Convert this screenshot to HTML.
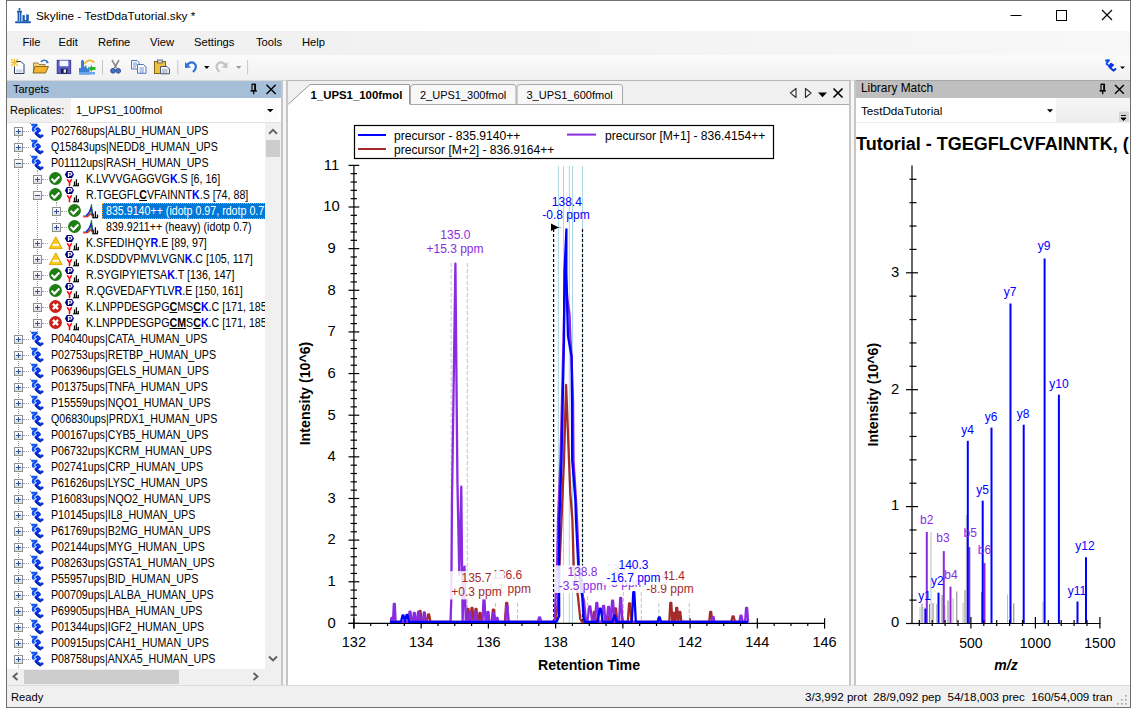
<!DOCTYPE html><html><head><meta charset="utf-8"><title>Skyline</title><style>
*{margin:0;padding:0;box-sizing:border-box}
html,body{width:1138px;height:712px;overflow:hidden;background:#fff;font-family:"Liberation Sans", sans-serif;}
.a{position:absolute}
.t{position:absolute;white-space:nowrap;line-height:1}
svg{position:absolute;overflow:visible}
.tt{position:absolute;white-space:nowrap;font-size:12px;line-height:12px;transform:scaleX(.888);transform-origin:0 0;color:#000}
.tt b{font-weight:bold}
.bx{position:absolute;width:9px;height:9px;border:1px solid #8f8f8f;background:linear-gradient(#fff,#dcdcdc)}
.bx .h{position:absolute;left:1px;top:3px;width:5px;height:1px;background:#2d4f99}
.bx .v{position:absolute;left:3px;top:1px;width:1px;height:5px;background:#2d4f99}
.dv{position:absolute;width:1px;border-left:1px dotted #a0a0a0}
.dh{position:absolute;height:1px;border-top:1px dotted #a0a0a0}
</style></head><body>
<div class="a" style="left:6px;top:0;width:1125px;height:708px;border:1px solid #6e6e6e;background:#f0f0f0"></div>
<div class="a" style="left:7px;top:1px;width:1123px;height:30px;background:#fff"></div>
<div class="t" style="left:36px;top:10.8px;font-size:11.8px;color:#000">Skyline - TestDdaTutorial.sky *</div>
<div class="a" style="left:7px;top:31px;width:1123px;height:24px;background:linear-gradient(to right,#f0f0f0 0%,#f2f2f2 45%,#f8f8f8 100%)"></div>
<div class="t" style="left:22.5px;top:37.4px;font-size:11.2px;color:#000">File</div>
<div class="t" style="left:58.6px;top:37.4px;font-size:11.2px;color:#000">Edit</div>
<div class="t" style="left:98px;top:37.4px;font-size:11.2px;color:#000">Refine</div>
<div class="t" style="left:150px;top:37.4px;font-size:11.2px;color:#000">View</div>
<div class="t" style="left:194px;top:37.4px;font-size:11.2px;color:#000">Settings</div>
<div class="t" style="left:256px;top:37.4px;font-size:11.2px;color:#000">Tools</div>
<div class="t" style="left:302px;top:37.4px;font-size:11.2px;color:#000">Help</div>
<div class="a" style="left:7px;top:55px;width:1123px;height:25px;background:linear-gradient(#fbfbfb,#f1f1f1)"></div>
<div class="a" style="left:7px;top:80px;width:1123px;height:1px;background:#dadada"></div>
<div class="a" style="left:7px;top:81px;width:275px;height:17px;background:#a7bed8"></div>
<div class="t" style="left:13px;top:84px;font-size:11px;color:#000">Targets</div>
<div class="a" style="left:7px;top:98px;width:64px;height:25px;background:#f0f0f0"></div>
<div class="t" style="left:10px;top:105px;font-size:11px;color:#000">Replicates:</div>
<div class="a" style="left:71px;top:98px;width:210px;height:25px;background:#fff"></div>
<div class="a" style="left:264px;top:98px;width:13px;height:24px;background:#fcfcfc"></div>
<div class="t" style="left:76px;top:105px;font-size:11px;color:#000">1_UPS1_100fmol</div>
<div class="a" style="left:7px;top:122px;width:274px;height:1px;background:#e3e3e3"></div>
<div class="a" style="left:7px;top:123px;width:258px;height:546px;background:#fff"></div>
<div class="a" style="left:7px;top:123px;width:258px;height:546px;overflow:hidden"><div class="a" style="left:-7px;top:-123px;width:1138px;height:712px"><div class="dv" style="left:18px;top:136px;height:532px"></div>
<div class="dv" style="left:37px;top:170px;height:166px"></div>
<div class="dv" style="left:56px;top:202px;height:24px"></div>
<div class="bx" style="left:14px;top:127px"><i class="h"></i><i class="v"></i></div>
<div class="dh" style="left:23px;top:131px;width:6px"></div>
<svg width="15" height="16" style="left:30px;top:123px" viewBox="0 0 15 16">
<circle cx="0.5" cy="0.4" r="0.7" fill="#5a78a8"/>
<path d="M2.4,1.9 L6.4,2 L3.4,4.8 L3,7 L3.6,7.6" fill="none" stroke="#0b50ec" stroke-width="2.5" stroke-linejoin="round" stroke-linecap="round"/>
<path d="M6.6,6.2 L8,5.6 L9.6,7.4 L7.6,8.8 L6,9.8 L8.4,12.2 L10.6,13.6 L12.2,12.6" fill="none" stroke="#0836e6" stroke-width="2.7" stroke-linejoin="round" stroke-linecap="round"/>
<path d="M5.2,10.6 L8,13.2 L10.2,14.8" fill="none" stroke="#00168c" stroke-width="1.3" stroke-linecap="round"/>
<path d="M3.2,2.2 L5,2.2 M8,6.6 L8.6,7.4" stroke="#4a9cff" stroke-width="0.8"/>
</svg>
<div class="tt" style="left:50.8px;top:124.9px">P02768ups|ALBU_HUMAN_UPS</div>
<div class="bx" style="left:14px;top:143px"><i class="h"></i><i class="v"></i></div>
<div class="dh" style="left:23px;top:147px;width:6px"></div>
<svg width="15" height="16" style="left:30px;top:139px" viewBox="0 0 15 16">
<circle cx="0.5" cy="0.4" r="0.7" fill="#5a78a8"/>
<path d="M2.4,1.9 L6.4,2 L3.4,4.8 L3,7 L3.6,7.6" fill="none" stroke="#0b50ec" stroke-width="2.5" stroke-linejoin="round" stroke-linecap="round"/>
<path d="M6.6,6.2 L8,5.6 L9.6,7.4 L7.6,8.8 L6,9.8 L8.4,12.2 L10.6,13.6 L12.2,12.6" fill="none" stroke="#0836e6" stroke-width="2.7" stroke-linejoin="round" stroke-linecap="round"/>
<path d="M5.2,10.6 L8,13.2 L10.2,14.8" fill="none" stroke="#00168c" stroke-width="1.3" stroke-linecap="round"/>
<path d="M3.2,2.2 L5,2.2 M8,6.6 L8.6,7.4" stroke="#4a9cff" stroke-width="0.8"/>
</svg>
<div class="tt" style="left:50.8px;top:140.9px">Q15843ups|NEDD8_HUMAN_UPS</div>
<div class="bx" style="left:14px;top:159px"><i class="h"></i></div>
<div class="dh" style="left:23px;top:163px;width:6px"></div>
<svg width="15" height="16" style="left:30px;top:155px" viewBox="0 0 15 16">
<circle cx="0.5" cy="0.4" r="0.7" fill="#5a78a8"/>
<path d="M2.4,1.9 L6.4,2 L3.4,4.8 L3,7 L3.6,7.6" fill="none" stroke="#0b50ec" stroke-width="2.5" stroke-linejoin="round" stroke-linecap="round"/>
<path d="M6.6,6.2 L8,5.6 L9.6,7.4 L7.6,8.8 L6,9.8 L8.4,12.2 L10.6,13.6 L12.2,12.6" fill="none" stroke="#0836e6" stroke-width="2.7" stroke-linejoin="round" stroke-linecap="round"/>
<path d="M5.2,10.6 L8,13.2 L10.2,14.8" fill="none" stroke="#00168c" stroke-width="1.3" stroke-linecap="round"/>
<path d="M3.2,2.2 L5,2.2 M8,6.6 L8.6,7.4" stroke="#4a9cff" stroke-width="0.8"/>
</svg>
<div class="tt" style="left:50.8px;top:156.9px">P01112ups|RASH_HUMAN_UPS</div>
<div class="bx" style="left:33px;top:175px"><i class="h"></i><i class="v"></i></div>
<div class="dh" style="left:42px;top:179px;width:6px"></div>
<svg width="14" height="14" style="left:49px;top:172px" viewBox="0 0 14 14"><circle cx="6.5" cy="6.5" r="6.4" fill="#1f7d14"/><path d="M2.6,6.6 L5.4,9.6 L10.4,4.4" fill="none" stroke="#fff" stroke-width="2.1"/></svg>
<svg width="16" height="16" style="left:64px;top:171px" viewBox="0 0 16 16">
<path d="M0.9,3.5 L2.9,0.1 L8,0.1 L10,3.5 L8,7.1 L2.9,7.1 Z" fill="#00007e"/>
<path d="M4.4,6 L4.4,1.6 L6.4,1.6 Q7.9,1.6 7.9,2.9 Q7.9,4.1 6.4,4.1 L4.4,4.1" fill="none" stroke="#fff" stroke-width="1.1"/>
<path d="M3.2,8.3 L5.5,11.5 L7.8,8.3 M5.5,11.3 L5.5,15.2" fill="none" stroke="#ff0a0a" stroke-width="1.6"/>
<path d="M9.2,14.7 L15,14.7" stroke="#000" stroke-width="1.2"/>
<path d="M10.5,14.5 L10.5,10.6 M12.4,14.5 L12.4,8.3 M14.3,14.5 L14.3,12" fill="none" stroke="#000" stroke-width="1.3"/>
</svg>
<div class="tt" style="left:86.4px;top:172.9px">K.LVVVGAGGVG<b style="color:#0000ff">K</b>.S [6, 16]</div>
<div class="bx" style="left:33px;top:191px"><i class="h"></i></div>
<div class="dh" style="left:42px;top:195px;width:6px"></div>
<svg width="14" height="14" style="left:49px;top:188px" viewBox="0 0 14 14"><circle cx="6.5" cy="6.5" r="6.4" fill="#1f7d14"/><path d="M2.6,6.6 L5.4,9.6 L10.4,4.4" fill="none" stroke="#fff" stroke-width="2.1"/></svg>
<svg width="16" height="16" style="left:64px;top:187px" viewBox="0 0 16 16">
<path d="M0.9,3.5 L2.9,0.1 L8,0.1 L10,3.5 L8,7.1 L2.9,7.1 Z" fill="#00007e"/>
<path d="M4.4,6 L4.4,1.6 L6.4,1.6 Q7.9,1.6 7.9,2.9 Q7.9,4.1 6.4,4.1 L4.4,4.1" fill="none" stroke="#fff" stroke-width="1.1"/>
<path d="M3.2,8.3 L5.5,11.5 L7.8,8.3 M5.5,11.3 L5.5,15.2" fill="none" stroke="#ff0a0a" stroke-width="1.6"/>
<path d="M9.2,14.7 L15,14.7" stroke="#000" stroke-width="1.2"/>
<path d="M10.5,14.5 L10.5,10.6 M12.4,14.5 L12.4,8.3 M14.3,14.5 L14.3,12" fill="none" stroke="#000" stroke-width="1.3"/>
</svg>
<div class="tt" style="left:86.4px;top:188.9px">R.TGEGFL<b style="text-decoration:underline">C</b>VFAINNT<b style="color:#0000ff">K</b>.S [74, 88]</div>
<div class="bx" style="left:52px;top:207px"><i class="h"></i><i class="v"></i></div>
<div class="dh" style="left:61px;top:211px;width:6px"></div>
<svg width="14" height="14" style="left:68px;top:204px" viewBox="0 0 14 14"><circle cx="6.5" cy="6.5" r="6.4" fill="#1f7d14"/><path d="M2.6,6.6 L5.4,9.6 L10.4,4.4" fill="none" stroke="#fff" stroke-width="2.1"/></svg>
<svg width="16" height="16" style="left:83px;top:203px" viewBox="0 0 16 16">
<path d="M0,13 L4,12.8 L7,10 L8.5,1.2 L9.3,10 L9.3,13" fill="none" stroke="#1a8a1a" stroke-width="1.1"/>
<path d="M3,12.8 L6,9.5 L8,5 L9,8.5 L9.2,11" fill="none" stroke="#1010ff" stroke-width="1.2"/>
<path d="M0.3,13.9 L4.5,13.6 L8.5,10.5 L9,13.5" fill="none" stroke="#e8221a" stroke-width="1.1"/>
<path d="M9.3,14.7 L15,14.7" stroke="#000" stroke-width="1.2"/>
<path d="M10.2,14.5 L10.2,10.5 M12.4,14.5 L12.4,8.3 M14.5,14.5 L14.5,11.6" fill="none" stroke="#000" stroke-width="1.3"/>
</svg>
<div class="a" style="left:101.8px;top:203.3px;width:180px;height:16px;background:#0078d7;border:1px dotted #f0a030"></div>
<div class="tt" style="left:105.5px;top:204.9px;color:#fff">835.9140++ (idotp 0.97, rdotp 0.7</div>
<div class="bx" style="left:52px;top:223px"><i class="h"></i><i class="v"></i></div>
<div class="dh" style="left:61px;top:227px;width:6px"></div>
<svg width="14" height="14" style="left:68px;top:220px" viewBox="0 0 14 14"><circle cx="6.5" cy="6.5" r="6.4" fill="#1f7d14"/><path d="M2.6,6.6 L5.4,9.6 L10.4,4.4" fill="none" stroke="#fff" stroke-width="2.1"/></svg>
<svg width="16" height="16" style="left:83px;top:219px" viewBox="0 0 16 16">
<path d="M0,13 L4,12.8 L7,10 L8.5,1.2 L9.3,10 L9.3,13" fill="none" stroke="#1a8a1a" stroke-width="1.1"/>
<path d="M3,12.8 L6,9.5 L8,5 L9,8.5 L9.2,11" fill="none" stroke="#1010ff" stroke-width="1.2"/>
<path d="M0.3,13.9 L4.5,13.6 L8.5,10.5 L9,13.5" fill="none" stroke="#e8221a" stroke-width="1.1"/>
<path d="M9.3,14.7 L15,14.7" stroke="#000" stroke-width="1.2"/>
<path d="M10.2,14.5 L10.2,10.5 M12.4,14.5 L12.4,8.3 M14.5,14.5 L14.5,11.6" fill="none" stroke="#000" stroke-width="1.3"/>
</svg>
<div class="tt" style="left:105.5px;top:220.9px">839.9211++ (heavy) (idotp 0.7)</div>
<div class="bx" style="left:33px;top:239px"><i class="h"></i><i class="v"></i></div>
<div class="dh" style="left:42px;top:243px;width:6px"></div>
<svg width="15" height="14" style="left:49px;top:236px" viewBox="0 0 15 14"><path d="M6.8,0.8 L13.3,12.6 L0.3,12.6 Z" fill="#f7c919" stroke="#d9a200" stroke-width="0.9" stroke-linejoin="round"/><rect x="3.7" y="7.9" width="6.2" height="1.9" fill="#fff"/></svg>
<svg width="16" height="16" style="left:64px;top:235px" viewBox="0 0 16 16">
<path d="M0.9,3.5 L2.9,0.1 L8,0.1 L10,3.5 L8,7.1 L2.9,7.1 Z" fill="#00007e"/>
<path d="M4.4,6 L4.4,1.6 L6.4,1.6 Q7.9,1.6 7.9,2.9 Q7.9,4.1 6.4,4.1 L4.4,4.1" fill="none" stroke="#fff" stroke-width="1.1"/>
<path d="M3.2,8.3 L5.5,11.5 L7.8,8.3 M5.5,11.3 L5.5,15.2" fill="none" stroke="#ff0a0a" stroke-width="1.6"/>
<path d="M9.2,14.7 L15,14.7" stroke="#000" stroke-width="1.2"/>
<path d="M10.5,14.5 L10.5,10.6 M12.4,14.5 L12.4,8.3 M14.3,14.5 L14.3,12" fill="none" stroke="#000" stroke-width="1.3"/>
</svg>
<div class="tt" style="left:86.4px;top:236.9px">K.SFEDIHQY<b style="color:#0000ff">R</b>.E [89, 97]</div>
<div class="bx" style="left:33px;top:255px"><i class="h"></i><i class="v"></i></div>
<div class="dh" style="left:42px;top:259px;width:6px"></div>
<svg width="15" height="14" style="left:49px;top:252px" viewBox="0 0 15 14"><path d="M6.8,0.8 L13.3,12.6 L0.3,12.6 Z" fill="#f7c919" stroke="#d9a200" stroke-width="0.9" stroke-linejoin="round"/><rect x="3.7" y="7.9" width="6.2" height="1.9" fill="#fff"/></svg>
<svg width="16" height="16" style="left:64px;top:251px" viewBox="0 0 16 16">
<path d="M0.9,3.5 L2.9,0.1 L8,0.1 L10,3.5 L8,7.1 L2.9,7.1 Z" fill="#00007e"/>
<path d="M4.4,6 L4.4,1.6 L6.4,1.6 Q7.9,1.6 7.9,2.9 Q7.9,4.1 6.4,4.1 L4.4,4.1" fill="none" stroke="#fff" stroke-width="1.1"/>
<path d="M3.2,8.3 L5.5,11.5 L7.8,8.3 M5.5,11.3 L5.5,15.2" fill="none" stroke="#ff0a0a" stroke-width="1.6"/>
<path d="M9.2,14.7 L15,14.7" stroke="#000" stroke-width="1.2"/>
<path d="M10.5,14.5 L10.5,10.6 M12.4,14.5 L12.4,8.3 M14.3,14.5 L14.3,12" fill="none" stroke="#000" stroke-width="1.3"/>
</svg>
<div class="tt" style="left:86.4px;top:252.9px">K.DSDDVPMVLVGN<b style="color:#0000ff">K</b>.C [105, 117]</div>
<div class="bx" style="left:33px;top:271px"><i class="h"></i><i class="v"></i></div>
<div class="dh" style="left:42px;top:275px;width:6px"></div>
<svg width="14" height="14" style="left:49px;top:268px" viewBox="0 0 14 14"><circle cx="6.5" cy="6.5" r="6.4" fill="#1f7d14"/><path d="M2.6,6.6 L5.4,9.6 L10.4,4.4" fill="none" stroke="#fff" stroke-width="2.1"/></svg>
<svg width="16" height="16" style="left:64px;top:267px" viewBox="0 0 16 16">
<path d="M0.9,3.5 L2.9,0.1 L8,0.1 L10,3.5 L8,7.1 L2.9,7.1 Z" fill="#00007e"/>
<path d="M4.4,6 L4.4,1.6 L6.4,1.6 Q7.9,1.6 7.9,2.9 Q7.9,4.1 6.4,4.1 L4.4,4.1" fill="none" stroke="#fff" stroke-width="1.1"/>
<path d="M3.2,8.3 L5.5,11.5 L7.8,8.3 M5.5,11.3 L5.5,15.2" fill="none" stroke="#ff0a0a" stroke-width="1.6"/>
<path d="M9.2,14.7 L15,14.7" stroke="#000" stroke-width="1.2"/>
<path d="M10.5,14.5 L10.5,10.6 M12.4,14.5 L12.4,8.3 M14.3,14.5 L14.3,12" fill="none" stroke="#000" stroke-width="1.3"/>
</svg>
<div class="tt" style="left:86.4px;top:268.9px">R.SYGIPYIETSA<b style="color:#0000ff">K</b>.T [136, 147]</div>
<div class="bx" style="left:33px;top:287px"><i class="h"></i><i class="v"></i></div>
<div class="dh" style="left:42px;top:291px;width:6px"></div>
<svg width="14" height="14" style="left:49px;top:284px" viewBox="0 0 14 14"><circle cx="6.5" cy="6.5" r="6.4" fill="#1f7d14"/><path d="M2.6,6.6 L5.4,9.6 L10.4,4.4" fill="none" stroke="#fff" stroke-width="2.1"/></svg>
<svg width="16" height="16" style="left:64px;top:283px" viewBox="0 0 16 16">
<path d="M0.9,3.5 L2.9,0.1 L8,0.1 L10,3.5 L8,7.1 L2.9,7.1 Z" fill="#00007e"/>
<path d="M4.4,6 L4.4,1.6 L6.4,1.6 Q7.9,1.6 7.9,2.9 Q7.9,4.1 6.4,4.1 L4.4,4.1" fill="none" stroke="#fff" stroke-width="1.1"/>
<path d="M3.2,8.3 L5.5,11.5 L7.8,8.3 M5.5,11.3 L5.5,15.2" fill="none" stroke="#ff0a0a" stroke-width="1.6"/>
<path d="M9.2,14.7 L15,14.7" stroke="#000" stroke-width="1.2"/>
<path d="M10.5,14.5 L10.5,10.6 M12.4,14.5 L12.4,8.3 M14.3,14.5 L14.3,12" fill="none" stroke="#000" stroke-width="1.3"/>
</svg>
<div class="tt" style="left:86.4px;top:284.9px">R.QGVEDAFYTLV<b style="color:#0000ff">R</b>.E [150, 161]</div>
<div class="bx" style="left:33px;top:303px"><i class="h"></i><i class="v"></i></div>
<div class="dh" style="left:42px;top:307px;width:6px"></div>
<svg width="14" height="14" style="left:49px;top:300px" viewBox="0 0 14 14"><circle cx="6.5" cy="6.5" r="6.4" fill="#cc1f1a"/><path d="M3.9,3.9 L9.1,9.1 M9.1,3.9 L3.9,9.1" fill="none" stroke="#fff" stroke-width="2.2"/></svg>
<svg width="16" height="16" style="left:64px;top:299px" viewBox="0 0 16 16">
<path d="M0.9,3.5 L2.9,0.1 L8,0.1 L10,3.5 L8,7.1 L2.9,7.1 Z" fill="#00007e"/>
<path d="M4.4,6 L4.4,1.6 L6.4,1.6 Q7.9,1.6 7.9,2.9 Q7.9,4.1 6.4,4.1 L4.4,4.1" fill="none" stroke="#fff" stroke-width="1.1"/>
<path d="M3.2,8.3 L5.5,11.5 L7.8,8.3 M5.5,11.3 L5.5,15.2" fill="none" stroke="#ff0a0a" stroke-width="1.6"/>
<path d="M9.2,14.7 L15,14.7" stroke="#000" stroke-width="1.2"/>
<path d="M10.5,14.5 L10.5,10.6 M12.4,14.5 L12.4,8.3 M14.3,14.5 L14.3,12" fill="none" stroke="#000" stroke-width="1.3"/>
</svg>
<div class="tt" style="left:86.4px;top:300.9px">K.LNPPDESGPG<b style="text-decoration:underline">C</b>MS<b style="text-decoration:underline">C</b><b style="color:#0000ff">K</b>.C [171, 185]</div>
<div class="bx" style="left:33px;top:319px"><i class="h"></i><i class="v"></i></div>
<div class="dh" style="left:42px;top:323px;width:6px"></div>
<svg width="14" height="14" style="left:49px;top:316px" viewBox="0 0 14 14"><circle cx="6.5" cy="6.5" r="6.4" fill="#cc1f1a"/><path d="M3.9,3.9 L9.1,9.1 M9.1,3.9 L3.9,9.1" fill="none" stroke="#fff" stroke-width="2.2"/></svg>
<svg width="16" height="16" style="left:64px;top:315px" viewBox="0 0 16 16">
<path d="M0.9,3.5 L2.9,0.1 L8,0.1 L10,3.5 L8,7.1 L2.9,7.1 Z" fill="#00007e"/>
<path d="M4.4,6 L4.4,1.6 L6.4,1.6 Q7.9,1.6 7.9,2.9 Q7.9,4.1 6.4,4.1 L4.4,4.1" fill="none" stroke="#fff" stroke-width="1.1"/>
<path d="M3.2,8.3 L5.5,11.5 L7.8,8.3 M5.5,11.3 L5.5,15.2" fill="none" stroke="#ff0a0a" stroke-width="1.6"/>
<path d="M9.2,14.7 L15,14.7" stroke="#000" stroke-width="1.2"/>
<path d="M10.5,14.5 L10.5,10.6 M12.4,14.5 L12.4,8.3 M14.3,14.5 L14.3,12" fill="none" stroke="#000" stroke-width="1.3"/>
</svg>
<div class="tt" style="left:86.4px;top:316.9px">K.LNPPDESGPG<b style="text-decoration:underline">C</b><b style="text-decoration:underline">M</b>S<b style="text-decoration:underline">C</b><b style="color:#0000ff">K</b>.C [171, 185]</div>
<div class="bx" style="left:14px;top:335px"><i class="h"></i><i class="v"></i></div>
<div class="dh" style="left:23px;top:339px;width:6px"></div>
<svg width="15" height="16" style="left:30px;top:331px" viewBox="0 0 15 16">
<circle cx="0.5" cy="0.4" r="0.7" fill="#5a78a8"/>
<path d="M2.4,1.9 L6.4,2 L3.4,4.8 L3,7 L3.6,7.6" fill="none" stroke="#0b50ec" stroke-width="2.5" stroke-linejoin="round" stroke-linecap="round"/>
<path d="M6.6,6.2 L8,5.6 L9.6,7.4 L7.6,8.8 L6,9.8 L8.4,12.2 L10.6,13.6 L12.2,12.6" fill="none" stroke="#0836e6" stroke-width="2.7" stroke-linejoin="round" stroke-linecap="round"/>
<path d="M5.2,10.6 L8,13.2 L10.2,14.8" fill="none" stroke="#00168c" stroke-width="1.3" stroke-linecap="round"/>
<path d="M3.2,2.2 L5,2.2 M8,6.6 L8.6,7.4" stroke="#4a9cff" stroke-width="0.8"/>
</svg>
<div class="tt" style="left:50.8px;top:332.9px">P04040ups|CATA_HUMAN_UPS</div>
<div class="bx" style="left:14px;top:351px"><i class="h"></i><i class="v"></i></div>
<div class="dh" style="left:23px;top:355px;width:6px"></div>
<svg width="15" height="16" style="left:30px;top:347px" viewBox="0 0 15 16">
<circle cx="0.5" cy="0.4" r="0.7" fill="#5a78a8"/>
<path d="M2.4,1.9 L6.4,2 L3.4,4.8 L3,7 L3.6,7.6" fill="none" stroke="#0b50ec" stroke-width="2.5" stroke-linejoin="round" stroke-linecap="round"/>
<path d="M6.6,6.2 L8,5.6 L9.6,7.4 L7.6,8.8 L6,9.8 L8.4,12.2 L10.6,13.6 L12.2,12.6" fill="none" stroke="#0836e6" stroke-width="2.7" stroke-linejoin="round" stroke-linecap="round"/>
<path d="M5.2,10.6 L8,13.2 L10.2,14.8" fill="none" stroke="#00168c" stroke-width="1.3" stroke-linecap="round"/>
<path d="M3.2,2.2 L5,2.2 M8,6.6 L8.6,7.4" stroke="#4a9cff" stroke-width="0.8"/>
</svg>
<div class="tt" style="left:50.8px;top:348.9px">P02753ups|RETBP_HUMAN_UPS</div>
<div class="bx" style="left:14px;top:367px"><i class="h"></i><i class="v"></i></div>
<div class="dh" style="left:23px;top:371px;width:6px"></div>
<svg width="15" height="16" style="left:30px;top:363px" viewBox="0 0 15 16">
<circle cx="0.5" cy="0.4" r="0.7" fill="#5a78a8"/>
<path d="M2.4,1.9 L6.4,2 L3.4,4.8 L3,7 L3.6,7.6" fill="none" stroke="#0b50ec" stroke-width="2.5" stroke-linejoin="round" stroke-linecap="round"/>
<path d="M6.6,6.2 L8,5.6 L9.6,7.4 L7.6,8.8 L6,9.8 L8.4,12.2 L10.6,13.6 L12.2,12.6" fill="none" stroke="#0836e6" stroke-width="2.7" stroke-linejoin="round" stroke-linecap="round"/>
<path d="M5.2,10.6 L8,13.2 L10.2,14.8" fill="none" stroke="#00168c" stroke-width="1.3" stroke-linecap="round"/>
<path d="M3.2,2.2 L5,2.2 M8,6.6 L8.6,7.4" stroke="#4a9cff" stroke-width="0.8"/>
</svg>
<div class="tt" style="left:50.8px;top:364.9px">P06396ups|GELS_HUMAN_UPS</div>
<div class="bx" style="left:14px;top:383px"><i class="h"></i><i class="v"></i></div>
<div class="dh" style="left:23px;top:387px;width:6px"></div>
<svg width="15" height="16" style="left:30px;top:379px" viewBox="0 0 15 16">
<circle cx="0.5" cy="0.4" r="0.7" fill="#5a78a8"/>
<path d="M2.4,1.9 L6.4,2 L3.4,4.8 L3,7 L3.6,7.6" fill="none" stroke="#0b50ec" stroke-width="2.5" stroke-linejoin="round" stroke-linecap="round"/>
<path d="M6.6,6.2 L8,5.6 L9.6,7.4 L7.6,8.8 L6,9.8 L8.4,12.2 L10.6,13.6 L12.2,12.6" fill="none" stroke="#0836e6" stroke-width="2.7" stroke-linejoin="round" stroke-linecap="round"/>
<path d="M5.2,10.6 L8,13.2 L10.2,14.8" fill="none" stroke="#00168c" stroke-width="1.3" stroke-linecap="round"/>
<path d="M3.2,2.2 L5,2.2 M8,6.6 L8.6,7.4" stroke="#4a9cff" stroke-width="0.8"/>
</svg>
<div class="tt" style="left:50.8px;top:380.9px">P01375ups|TNFA_HUMAN_UPS</div>
<div class="bx" style="left:14px;top:399px"><i class="h"></i><i class="v"></i></div>
<div class="dh" style="left:23px;top:403px;width:6px"></div>
<svg width="15" height="16" style="left:30px;top:395px" viewBox="0 0 15 16">
<circle cx="0.5" cy="0.4" r="0.7" fill="#5a78a8"/>
<path d="M2.4,1.9 L6.4,2 L3.4,4.8 L3,7 L3.6,7.6" fill="none" stroke="#0b50ec" stroke-width="2.5" stroke-linejoin="round" stroke-linecap="round"/>
<path d="M6.6,6.2 L8,5.6 L9.6,7.4 L7.6,8.8 L6,9.8 L8.4,12.2 L10.6,13.6 L12.2,12.6" fill="none" stroke="#0836e6" stroke-width="2.7" stroke-linejoin="round" stroke-linecap="round"/>
<path d="M5.2,10.6 L8,13.2 L10.2,14.8" fill="none" stroke="#00168c" stroke-width="1.3" stroke-linecap="round"/>
<path d="M3.2,2.2 L5,2.2 M8,6.6 L8.6,7.4" stroke="#4a9cff" stroke-width="0.8"/>
</svg>
<div class="tt" style="left:50.8px;top:396.9px">P15559ups|NQO1_HUMAN_UPS</div>
<div class="bx" style="left:14px;top:415px"><i class="h"></i><i class="v"></i></div>
<div class="dh" style="left:23px;top:419px;width:6px"></div>
<svg width="15" height="16" style="left:30px;top:411px" viewBox="0 0 15 16">
<circle cx="0.5" cy="0.4" r="0.7" fill="#5a78a8"/>
<path d="M2.4,1.9 L6.4,2 L3.4,4.8 L3,7 L3.6,7.6" fill="none" stroke="#0b50ec" stroke-width="2.5" stroke-linejoin="round" stroke-linecap="round"/>
<path d="M6.6,6.2 L8,5.6 L9.6,7.4 L7.6,8.8 L6,9.8 L8.4,12.2 L10.6,13.6 L12.2,12.6" fill="none" stroke="#0836e6" stroke-width="2.7" stroke-linejoin="round" stroke-linecap="round"/>
<path d="M5.2,10.6 L8,13.2 L10.2,14.8" fill="none" stroke="#00168c" stroke-width="1.3" stroke-linecap="round"/>
<path d="M3.2,2.2 L5,2.2 M8,6.6 L8.6,7.4" stroke="#4a9cff" stroke-width="0.8"/>
</svg>
<div class="tt" style="left:50.8px;top:412.9px">Q06830ups|PRDX1_HUMAN_UPS</div>
<div class="bx" style="left:14px;top:431px"><i class="h"></i><i class="v"></i></div>
<div class="dh" style="left:23px;top:435px;width:6px"></div>
<svg width="15" height="16" style="left:30px;top:427px" viewBox="0 0 15 16">
<circle cx="0.5" cy="0.4" r="0.7" fill="#5a78a8"/>
<path d="M2.4,1.9 L6.4,2 L3.4,4.8 L3,7 L3.6,7.6" fill="none" stroke="#0b50ec" stroke-width="2.5" stroke-linejoin="round" stroke-linecap="round"/>
<path d="M6.6,6.2 L8,5.6 L9.6,7.4 L7.6,8.8 L6,9.8 L8.4,12.2 L10.6,13.6 L12.2,12.6" fill="none" stroke="#0836e6" stroke-width="2.7" stroke-linejoin="round" stroke-linecap="round"/>
<path d="M5.2,10.6 L8,13.2 L10.2,14.8" fill="none" stroke="#00168c" stroke-width="1.3" stroke-linecap="round"/>
<path d="M3.2,2.2 L5,2.2 M8,6.6 L8.6,7.4" stroke="#4a9cff" stroke-width="0.8"/>
</svg>
<div class="tt" style="left:50.8px;top:428.9px">P00167ups|CYB5_HUMAN_UPS</div>
<div class="bx" style="left:14px;top:447px"><i class="h"></i><i class="v"></i></div>
<div class="dh" style="left:23px;top:451px;width:6px"></div>
<svg width="15" height="16" style="left:30px;top:443px" viewBox="0 0 15 16">
<circle cx="0.5" cy="0.4" r="0.7" fill="#5a78a8"/>
<path d="M2.4,1.9 L6.4,2 L3.4,4.8 L3,7 L3.6,7.6" fill="none" stroke="#0b50ec" stroke-width="2.5" stroke-linejoin="round" stroke-linecap="round"/>
<path d="M6.6,6.2 L8,5.6 L9.6,7.4 L7.6,8.8 L6,9.8 L8.4,12.2 L10.6,13.6 L12.2,12.6" fill="none" stroke="#0836e6" stroke-width="2.7" stroke-linejoin="round" stroke-linecap="round"/>
<path d="M5.2,10.6 L8,13.2 L10.2,14.8" fill="none" stroke="#00168c" stroke-width="1.3" stroke-linecap="round"/>
<path d="M3.2,2.2 L5,2.2 M8,6.6 L8.6,7.4" stroke="#4a9cff" stroke-width="0.8"/>
</svg>
<div class="tt" style="left:50.8px;top:444.9px">P06732ups|KCRM_HUMAN_UPS</div>
<div class="bx" style="left:14px;top:463px"><i class="h"></i><i class="v"></i></div>
<div class="dh" style="left:23px;top:467px;width:6px"></div>
<svg width="15" height="16" style="left:30px;top:459px" viewBox="0 0 15 16">
<circle cx="0.5" cy="0.4" r="0.7" fill="#5a78a8"/>
<path d="M2.4,1.9 L6.4,2 L3.4,4.8 L3,7 L3.6,7.6" fill="none" stroke="#0b50ec" stroke-width="2.5" stroke-linejoin="round" stroke-linecap="round"/>
<path d="M6.6,6.2 L8,5.6 L9.6,7.4 L7.6,8.8 L6,9.8 L8.4,12.2 L10.6,13.6 L12.2,12.6" fill="none" stroke="#0836e6" stroke-width="2.7" stroke-linejoin="round" stroke-linecap="round"/>
<path d="M5.2,10.6 L8,13.2 L10.2,14.8" fill="none" stroke="#00168c" stroke-width="1.3" stroke-linecap="round"/>
<path d="M3.2,2.2 L5,2.2 M8,6.6 L8.6,7.4" stroke="#4a9cff" stroke-width="0.8"/>
</svg>
<div class="tt" style="left:50.8px;top:460.9px">P02741ups|CRP_HUMAN_UPS</div>
<div class="bx" style="left:14px;top:479px"><i class="h"></i><i class="v"></i></div>
<div class="dh" style="left:23px;top:483px;width:6px"></div>
<svg width="15" height="16" style="left:30px;top:475px" viewBox="0 0 15 16">
<circle cx="0.5" cy="0.4" r="0.7" fill="#5a78a8"/>
<path d="M2.4,1.9 L6.4,2 L3.4,4.8 L3,7 L3.6,7.6" fill="none" stroke="#0b50ec" stroke-width="2.5" stroke-linejoin="round" stroke-linecap="round"/>
<path d="M6.6,6.2 L8,5.6 L9.6,7.4 L7.6,8.8 L6,9.8 L8.4,12.2 L10.6,13.6 L12.2,12.6" fill="none" stroke="#0836e6" stroke-width="2.7" stroke-linejoin="round" stroke-linecap="round"/>
<path d="M5.2,10.6 L8,13.2 L10.2,14.8" fill="none" stroke="#00168c" stroke-width="1.3" stroke-linecap="round"/>
<path d="M3.2,2.2 L5,2.2 M8,6.6 L8.6,7.4" stroke="#4a9cff" stroke-width="0.8"/>
</svg>
<div class="tt" style="left:50.8px;top:476.9px">P61626ups|LYSC_HUMAN_UPS</div>
<div class="bx" style="left:14px;top:495px"><i class="h"></i><i class="v"></i></div>
<div class="dh" style="left:23px;top:499px;width:6px"></div>
<svg width="15" height="16" style="left:30px;top:491px" viewBox="0 0 15 16">
<circle cx="0.5" cy="0.4" r="0.7" fill="#5a78a8"/>
<path d="M2.4,1.9 L6.4,2 L3.4,4.8 L3,7 L3.6,7.6" fill="none" stroke="#0b50ec" stroke-width="2.5" stroke-linejoin="round" stroke-linecap="round"/>
<path d="M6.6,6.2 L8,5.6 L9.6,7.4 L7.6,8.8 L6,9.8 L8.4,12.2 L10.6,13.6 L12.2,12.6" fill="none" stroke="#0836e6" stroke-width="2.7" stroke-linejoin="round" stroke-linecap="round"/>
<path d="M5.2,10.6 L8,13.2 L10.2,14.8" fill="none" stroke="#00168c" stroke-width="1.3" stroke-linecap="round"/>
<path d="M3.2,2.2 L5,2.2 M8,6.6 L8.6,7.4" stroke="#4a9cff" stroke-width="0.8"/>
</svg>
<div class="tt" style="left:50.8px;top:492.9px">P16083ups|NQO2_HUMAN_UPS</div>
<div class="bx" style="left:14px;top:511px"><i class="h"></i><i class="v"></i></div>
<div class="dh" style="left:23px;top:515px;width:6px"></div>
<svg width="15" height="16" style="left:30px;top:507px" viewBox="0 0 15 16">
<circle cx="0.5" cy="0.4" r="0.7" fill="#5a78a8"/>
<path d="M2.4,1.9 L6.4,2 L3.4,4.8 L3,7 L3.6,7.6" fill="none" stroke="#0b50ec" stroke-width="2.5" stroke-linejoin="round" stroke-linecap="round"/>
<path d="M6.6,6.2 L8,5.6 L9.6,7.4 L7.6,8.8 L6,9.8 L8.4,12.2 L10.6,13.6 L12.2,12.6" fill="none" stroke="#0836e6" stroke-width="2.7" stroke-linejoin="round" stroke-linecap="round"/>
<path d="M5.2,10.6 L8,13.2 L10.2,14.8" fill="none" stroke="#00168c" stroke-width="1.3" stroke-linecap="round"/>
<path d="M3.2,2.2 L5,2.2 M8,6.6 L8.6,7.4" stroke="#4a9cff" stroke-width="0.8"/>
</svg>
<div class="tt" style="left:50.8px;top:508.9px">P10145ups|IL8_HUMAN_UPS</div>
<div class="bx" style="left:14px;top:527px"><i class="h"></i><i class="v"></i></div>
<div class="dh" style="left:23px;top:531px;width:6px"></div>
<svg width="15" height="16" style="left:30px;top:523px" viewBox="0 0 15 16">
<circle cx="0.5" cy="0.4" r="0.7" fill="#5a78a8"/>
<path d="M2.4,1.9 L6.4,2 L3.4,4.8 L3,7 L3.6,7.6" fill="none" stroke="#0b50ec" stroke-width="2.5" stroke-linejoin="round" stroke-linecap="round"/>
<path d="M6.6,6.2 L8,5.6 L9.6,7.4 L7.6,8.8 L6,9.8 L8.4,12.2 L10.6,13.6 L12.2,12.6" fill="none" stroke="#0836e6" stroke-width="2.7" stroke-linejoin="round" stroke-linecap="round"/>
<path d="M5.2,10.6 L8,13.2 L10.2,14.8" fill="none" stroke="#00168c" stroke-width="1.3" stroke-linecap="round"/>
<path d="M3.2,2.2 L5,2.2 M8,6.6 L8.6,7.4" stroke="#4a9cff" stroke-width="0.8"/>
</svg>
<div class="tt" style="left:50.8px;top:524.9px">P61769ups|B2MG_HUMAN_UPS</div>
<div class="bx" style="left:14px;top:543px"><i class="h"></i><i class="v"></i></div>
<div class="dh" style="left:23px;top:547px;width:6px"></div>
<svg width="15" height="16" style="left:30px;top:539px" viewBox="0 0 15 16">
<circle cx="0.5" cy="0.4" r="0.7" fill="#5a78a8"/>
<path d="M2.4,1.9 L6.4,2 L3.4,4.8 L3,7 L3.6,7.6" fill="none" stroke="#0b50ec" stroke-width="2.5" stroke-linejoin="round" stroke-linecap="round"/>
<path d="M6.6,6.2 L8,5.6 L9.6,7.4 L7.6,8.8 L6,9.8 L8.4,12.2 L10.6,13.6 L12.2,12.6" fill="none" stroke="#0836e6" stroke-width="2.7" stroke-linejoin="round" stroke-linecap="round"/>
<path d="M5.2,10.6 L8,13.2 L10.2,14.8" fill="none" stroke="#00168c" stroke-width="1.3" stroke-linecap="round"/>
<path d="M3.2,2.2 L5,2.2 M8,6.6 L8.6,7.4" stroke="#4a9cff" stroke-width="0.8"/>
</svg>
<div class="tt" style="left:50.8px;top:540.9px">P02144ups|MYG_HUMAN_UPS</div>
<div class="bx" style="left:14px;top:559px"><i class="h"></i><i class="v"></i></div>
<div class="dh" style="left:23px;top:563px;width:6px"></div>
<svg width="15" height="16" style="left:30px;top:555px" viewBox="0 0 15 16">
<circle cx="0.5" cy="0.4" r="0.7" fill="#5a78a8"/>
<path d="M2.4,1.9 L6.4,2 L3.4,4.8 L3,7 L3.6,7.6" fill="none" stroke="#0b50ec" stroke-width="2.5" stroke-linejoin="round" stroke-linecap="round"/>
<path d="M6.6,6.2 L8,5.6 L9.6,7.4 L7.6,8.8 L6,9.8 L8.4,12.2 L10.6,13.6 L12.2,12.6" fill="none" stroke="#0836e6" stroke-width="2.7" stroke-linejoin="round" stroke-linecap="round"/>
<path d="M5.2,10.6 L8,13.2 L10.2,14.8" fill="none" stroke="#00168c" stroke-width="1.3" stroke-linecap="round"/>
<path d="M3.2,2.2 L5,2.2 M8,6.6 L8.6,7.4" stroke="#4a9cff" stroke-width="0.8"/>
</svg>
<div class="tt" style="left:50.8px;top:556.9px">P08263ups|GSTA1_HUMAN_UPS</div>
<div class="bx" style="left:14px;top:575px"><i class="h"></i><i class="v"></i></div>
<div class="dh" style="left:23px;top:579px;width:6px"></div>
<svg width="15" height="16" style="left:30px;top:571px" viewBox="0 0 15 16">
<circle cx="0.5" cy="0.4" r="0.7" fill="#5a78a8"/>
<path d="M2.4,1.9 L6.4,2 L3.4,4.8 L3,7 L3.6,7.6" fill="none" stroke="#0b50ec" stroke-width="2.5" stroke-linejoin="round" stroke-linecap="round"/>
<path d="M6.6,6.2 L8,5.6 L9.6,7.4 L7.6,8.8 L6,9.8 L8.4,12.2 L10.6,13.6 L12.2,12.6" fill="none" stroke="#0836e6" stroke-width="2.7" stroke-linejoin="round" stroke-linecap="round"/>
<path d="M5.2,10.6 L8,13.2 L10.2,14.8" fill="none" stroke="#00168c" stroke-width="1.3" stroke-linecap="round"/>
<path d="M3.2,2.2 L5,2.2 M8,6.6 L8.6,7.4" stroke="#4a9cff" stroke-width="0.8"/>
</svg>
<div class="tt" style="left:50.8px;top:572.9px">P55957ups|BID_HUMAN_UPS</div>
<div class="bx" style="left:14px;top:591px"><i class="h"></i><i class="v"></i></div>
<div class="dh" style="left:23px;top:595px;width:6px"></div>
<svg width="15" height="16" style="left:30px;top:587px" viewBox="0 0 15 16">
<circle cx="0.5" cy="0.4" r="0.7" fill="#5a78a8"/>
<path d="M2.4,1.9 L6.4,2 L3.4,4.8 L3,7 L3.6,7.6" fill="none" stroke="#0b50ec" stroke-width="2.5" stroke-linejoin="round" stroke-linecap="round"/>
<path d="M6.6,6.2 L8,5.6 L9.6,7.4 L7.6,8.8 L6,9.8 L8.4,12.2 L10.6,13.6 L12.2,12.6" fill="none" stroke="#0836e6" stroke-width="2.7" stroke-linejoin="round" stroke-linecap="round"/>
<path d="M5.2,10.6 L8,13.2 L10.2,14.8" fill="none" stroke="#00168c" stroke-width="1.3" stroke-linecap="round"/>
<path d="M3.2,2.2 L5,2.2 M8,6.6 L8.6,7.4" stroke="#4a9cff" stroke-width="0.8"/>
</svg>
<div class="tt" style="left:50.8px;top:588.9px">P00709ups|LALBA_HUMAN_UPS</div>
<div class="bx" style="left:14px;top:607px"><i class="h"></i><i class="v"></i></div>
<div class="dh" style="left:23px;top:611px;width:6px"></div>
<svg width="15" height="16" style="left:30px;top:603px" viewBox="0 0 15 16">
<circle cx="0.5" cy="0.4" r="0.7" fill="#5a78a8"/>
<path d="M2.4,1.9 L6.4,2 L3.4,4.8 L3,7 L3.6,7.6" fill="none" stroke="#0b50ec" stroke-width="2.5" stroke-linejoin="round" stroke-linecap="round"/>
<path d="M6.6,6.2 L8,5.6 L9.6,7.4 L7.6,8.8 L6,9.8 L8.4,12.2 L10.6,13.6 L12.2,12.6" fill="none" stroke="#0836e6" stroke-width="2.7" stroke-linejoin="round" stroke-linecap="round"/>
<path d="M5.2,10.6 L8,13.2 L10.2,14.8" fill="none" stroke="#00168c" stroke-width="1.3" stroke-linecap="round"/>
<path d="M3.2,2.2 L5,2.2 M8,6.6 L8.6,7.4" stroke="#4a9cff" stroke-width="0.8"/>
</svg>
<div class="tt" style="left:50.8px;top:604.9px">P69905ups|HBA_HUMAN_UPS</div>
<div class="bx" style="left:14px;top:623px"><i class="h"></i><i class="v"></i></div>
<div class="dh" style="left:23px;top:627px;width:6px"></div>
<svg width="15" height="16" style="left:30px;top:619px" viewBox="0 0 15 16">
<circle cx="0.5" cy="0.4" r="0.7" fill="#5a78a8"/>
<path d="M2.4,1.9 L6.4,2 L3.4,4.8 L3,7 L3.6,7.6" fill="none" stroke="#0b50ec" stroke-width="2.5" stroke-linejoin="round" stroke-linecap="round"/>
<path d="M6.6,6.2 L8,5.6 L9.6,7.4 L7.6,8.8 L6,9.8 L8.4,12.2 L10.6,13.6 L12.2,12.6" fill="none" stroke="#0836e6" stroke-width="2.7" stroke-linejoin="round" stroke-linecap="round"/>
<path d="M5.2,10.6 L8,13.2 L10.2,14.8" fill="none" stroke="#00168c" stroke-width="1.3" stroke-linecap="round"/>
<path d="M3.2,2.2 L5,2.2 M8,6.6 L8.6,7.4" stroke="#4a9cff" stroke-width="0.8"/>
</svg>
<div class="tt" style="left:50.8px;top:620.9px">P01344ups|IGF2_HUMAN_UPS</div>
<div class="bx" style="left:14px;top:639px"><i class="h"></i><i class="v"></i></div>
<div class="dh" style="left:23px;top:643px;width:6px"></div>
<svg width="15" height="16" style="left:30px;top:635px" viewBox="0 0 15 16">
<circle cx="0.5" cy="0.4" r="0.7" fill="#5a78a8"/>
<path d="M2.4,1.9 L6.4,2 L3.4,4.8 L3,7 L3.6,7.6" fill="none" stroke="#0b50ec" stroke-width="2.5" stroke-linejoin="round" stroke-linecap="round"/>
<path d="M6.6,6.2 L8,5.6 L9.6,7.4 L7.6,8.8 L6,9.8 L8.4,12.2 L10.6,13.6 L12.2,12.6" fill="none" stroke="#0836e6" stroke-width="2.7" stroke-linejoin="round" stroke-linecap="round"/>
<path d="M5.2,10.6 L8,13.2 L10.2,14.8" fill="none" stroke="#00168c" stroke-width="1.3" stroke-linecap="round"/>
<path d="M3.2,2.2 L5,2.2 M8,6.6 L8.6,7.4" stroke="#4a9cff" stroke-width="0.8"/>
</svg>
<div class="tt" style="left:50.8px;top:636.9px">P00915ups|CAH1_HUMAN_UPS</div>
<div class="bx" style="left:14px;top:655px"><i class="h"></i><i class="v"></i></div>
<div class="dh" style="left:23px;top:659px;width:6px"></div>
<svg width="15" height="16" style="left:30px;top:651px" viewBox="0 0 15 16">
<circle cx="0.5" cy="0.4" r="0.7" fill="#5a78a8"/>
<path d="M2.4,1.9 L6.4,2 L3.4,4.8 L3,7 L3.6,7.6" fill="none" stroke="#0b50ec" stroke-width="2.5" stroke-linejoin="round" stroke-linecap="round"/>
<path d="M6.6,6.2 L8,5.6 L9.6,7.4 L7.6,8.8 L6,9.8 L8.4,12.2 L10.6,13.6 L12.2,12.6" fill="none" stroke="#0836e6" stroke-width="2.7" stroke-linejoin="round" stroke-linecap="round"/>
<path d="M5.2,10.6 L8,13.2 L10.2,14.8" fill="none" stroke="#00168c" stroke-width="1.3" stroke-linecap="round"/>
<path d="M3.2,2.2 L5,2.2 M8,6.6 L8.6,7.4" stroke="#4a9cff" stroke-width="0.8"/>
</svg>
<div class="tt" style="left:50.8px;top:652.9px">P08758ups|ANXA5_HUMAN_UPS</div></div></div>
<div class="a" style="left:265px;top:123px;width:16px;height:546px;background:#f0f0f0"></div>
<div class="a" style="left:266px;top:140px;width:14px;height:17px;background:#cdcdcd"></div>
<div class="a" style="left:7px;top:669px;width:274px;height:16px;background:#f0f0f0"></div>
<div class="a" style="left:24px;top:670px;width:155px;height:14px;background:#cdcdcd"></div>
<div class="a" style="left:281px;top:80px;width:2px;height:605px;background:#c6c6c6"></div>
<div class="a" style="left:283px;top:81px;width:3px;height:604px;background:#f6f6f6"></div>
<div class="a" style="left:851px;top:81px;width:3px;height:604px;background:#f8f8f8"></div>
<div class="a" style="left:286px;top:80px;width:565px;height:605px;border:2px solid #c6c6c6;border-top:1px solid #b8b8b8;border-bottom:none;background:#fff"></div>
<div class="a" style="left:288px;top:81px;width:561px;height:23px;background:#f0f0f0"></div>
<div class="a" style="left:288px;top:104px;width:561px;height:1px;background:#a9a9a9"></div>
<div class="a" style="left:854px;top:80px;width:276px;height:605px;border-left:2px solid #c6c6c6;background:#fff"></div>
<div class="a" style="left:856px;top:80px;width:274px;height:1px;background:#a8a8a8"></div>
<div class="a" style="left:856px;top:81px;width:274px;height:17px;background:#bfbfbf"></div>
<div class="t" style="left:861px;top:82.6px;font-size:11.9px;color:#000">Library Match</div>
<div class="a" style="left:856px;top:98px;width:274px;height:25px;background:linear-gradient(#f7f7f7,#ececec)"></div>
<div class="a" style="left:856px;top:98px;width:200px;height:24px;background:#fff"></div>
<div class="t" style="left:861px;top:105.3px;font-size:11.7px;color:#000">TestDdaTutorial</div>
<svg width="1138" height="712" style="left:0;top:0" viewBox="0 0 1138 712" font-family="'Liberation Sans', sans-serif"><rect x="354.5" y="125.5" width="419" height="33" fill="#fff" stroke="#000" stroke-width="1.2"/>
<line x1="358" y1="135" x2="386" y2="135" stroke="#0000ff" stroke-width="2" />
<line x1="358" y1="149" x2="386" y2="149" stroke="#a52a2a" stroke-width="2" />
<line x1="567" y1="134.6" x2="596" y2="134.6" stroke="#8a2be2" stroke-width="2" />
<text x="394" y="140" font-size="12.1" fill="#000" text-anchor="start" font-weight="normal" >precursor - 835.9140++</text>
<text x="394" y="153.6" font-size="12.1" fill="#000" text-anchor="start" font-weight="normal" >precursor [M+2] - 836.9164++</text>
<text x="605" y="139.5" font-size="12.1" fill="#000" text-anchor="start" font-weight="normal" >precursor [M+1] - 836.4154++</text>
<line x1="558.4" y1="166" x2="558.4" y2="623" stroke="#add8e6" stroke-width="1" />
<line x1="563.5" y1="166" x2="563.5" y2="623" stroke="#add8e6" stroke-width="1" />
<line x1="569.3" y1="166" x2="569.3" y2="623" stroke="#add8e6" stroke-width="1" />
<line x1="572.5" y1="166" x2="572.5" y2="623" stroke="#add8e6" stroke-width="1" />
<line x1="582.5" y1="166" x2="582.5" y2="623" stroke="#add8e6" stroke-width="1" />
<line x1="451.2" y1="263" x2="451.2" y2="621" stroke="#c4c4c4" stroke-width="1" stroke-dasharray="4,2"/>
<line x1="467.3" y1="263" x2="467.3" y2="621" stroke="#c4c4c4" stroke-width="1" stroke-dasharray="4,2"/>
<line x1="495.4" y1="603" x2="495.4" y2="621" stroke="#c4c4c4" stroke-width="1" stroke-dasharray="4,2"/>
<line x1="517.5" y1="603" x2="517.5" y2="621" stroke="#c4c4c4" stroke-width="1" stroke-dasharray="4,2"/>
<line x1="587.4" y1="596" x2="587.4" y2="621" stroke="#c4c4c4" stroke-width="1" stroke-dasharray="4,2"/>
<line x1="623.4" y1="592" x2="623.4" y2="621" stroke="#c4c4c4" stroke-width="1" stroke-dasharray="4,2"/>
<line x1="641.3" y1="592" x2="641.3" y2="621" stroke="#c4c4c4" stroke-width="1" stroke-dasharray="4,2"/>
<line x1="658.8" y1="603" x2="658.8" y2="621" stroke="#c4c4c4" stroke-width="1" stroke-dasharray="4,2"/>
<line x1="689.3" y1="603" x2="689.3" y2="621" stroke="#c4c4c4" stroke-width="1" stroke-dasharray="4,2"/>
<line x1="553.6" y1="229" x2="553.6" y2="623" stroke="#000" stroke-width="1.2" stroke-dasharray="3,2"/>
<line x1="582.5" y1="229" x2="582.5" y2="623" stroke="#000" stroke-width="1.2" stroke-dasharray="3,2"/>
<path d="M551,223.5 L551,231 L558.5,227.8 L562.7,227.6 L558.5,227.2 Z" fill="#000"/>
<line x1="353.9" y1="165.4" x2="353.9" y2="628.5" stroke="#000" stroke-width="1.2" />
<line x1="348.5" y1="623.4" x2="824.8" y2="623.4" stroke="#000" stroke-width="1.2" />
<line x1="348.5" y1="623.4" x2="359.3" y2="623.4" stroke="#000" stroke-width="1.2" />
<line x1="350.6" y1="615.072" x2="357" y2="615.072" stroke="#000" stroke-width="1.2" />
<line x1="350.6" y1="606.744" x2="357" y2="606.744" stroke="#000" stroke-width="1.2" />
<line x1="350.6" y1="598.4159999999999" x2="357" y2="598.4159999999999" stroke="#000" stroke-width="1.2" />
<line x1="350.6" y1="590.088" x2="357" y2="590.088" stroke="#000" stroke-width="1.2" />
<line x1="348.5" y1="581.76" x2="359.3" y2="581.76" stroke="#000" stroke-width="1.2" />
<line x1="350.6" y1="573.432" x2="357" y2="573.432" stroke="#000" stroke-width="1.2" />
<line x1="350.6" y1="565.1039999999999" x2="357" y2="565.1039999999999" stroke="#000" stroke-width="1.2" />
<line x1="350.6" y1="556.776" x2="357" y2="556.776" stroke="#000" stroke-width="1.2" />
<line x1="350.6" y1="548.448" x2="357" y2="548.448" stroke="#000" stroke-width="1.2" />
<line x1="348.5" y1="540.12" x2="359.3" y2="540.12" stroke="#000" stroke-width="1.2" />
<line x1="350.6" y1="531.7919999999999" x2="357" y2="531.7919999999999" stroke="#000" stroke-width="1.2" />
<line x1="350.6" y1="523.4639999999999" x2="357" y2="523.4639999999999" stroke="#000" stroke-width="1.2" />
<line x1="350.6" y1="515.136" x2="357" y2="515.136" stroke="#000" stroke-width="1.2" />
<line x1="350.6" y1="506.808" x2="357" y2="506.808" stroke="#000" stroke-width="1.2" />
<line x1="348.5" y1="498.47999999999996" x2="359.3" y2="498.47999999999996" stroke="#000" stroke-width="1.2" />
<line x1="350.6" y1="490.15199999999993" x2="357" y2="490.15199999999993" stroke="#000" stroke-width="1.2" />
<line x1="350.6" y1="481.82399999999996" x2="357" y2="481.82399999999996" stroke="#000" stroke-width="1.2" />
<line x1="350.6" y1="473.496" x2="357" y2="473.496" stroke="#000" stroke-width="1.2" />
<line x1="350.6" y1="465.168" x2="357" y2="465.168" stroke="#000" stroke-width="1.2" />
<line x1="348.5" y1="456.84" x2="359.3" y2="456.84" stroke="#000" stroke-width="1.2" />
<line x1="350.6" y1="448.51199999999994" x2="357" y2="448.51199999999994" stroke="#000" stroke-width="1.2" />
<line x1="350.6" y1="440.18399999999997" x2="357" y2="440.18399999999997" stroke="#000" stroke-width="1.2" />
<line x1="350.6" y1="431.856" x2="357" y2="431.856" stroke="#000" stroke-width="1.2" />
<line x1="350.6" y1="423.5279999999999" x2="357" y2="423.5279999999999" stroke="#000" stroke-width="1.2" />
<line x1="348.5" y1="415.2" x2="359.3" y2="415.2" stroke="#000" stroke-width="1.2" />
<line x1="350.6" y1="406.87199999999996" x2="357" y2="406.87199999999996" stroke="#000" stroke-width="1.2" />
<line x1="350.6" y1="398.544" x2="357" y2="398.544" stroke="#000" stroke-width="1.2" />
<line x1="350.6" y1="390.21599999999995" x2="357" y2="390.21599999999995" stroke="#000" stroke-width="1.2" />
<line x1="350.6" y1="381.8879999999999" x2="357" y2="381.8879999999999" stroke="#000" stroke-width="1.2" />
<line x1="348.5" y1="373.55999999999995" x2="359.3" y2="373.55999999999995" stroke="#000" stroke-width="1.2" />
<line x1="350.6" y1="365.23199999999997" x2="357" y2="365.23199999999997" stroke="#000" stroke-width="1.2" />
<line x1="350.6" y1="356.90399999999994" x2="357" y2="356.90399999999994" stroke="#000" stroke-width="1.2" />
<line x1="350.6" y1="348.57599999999996" x2="357" y2="348.57599999999996" stroke="#000" stroke-width="1.2" />
<line x1="350.6" y1="340.24799999999993" x2="357" y2="340.24799999999993" stroke="#000" stroke-width="1.2" />
<line x1="348.5" y1="331.91999999999996" x2="359.3" y2="331.91999999999996" stroke="#000" stroke-width="1.2" />
<line x1="350.6" y1="323.592" x2="357" y2="323.592" stroke="#000" stroke-width="1.2" />
<line x1="350.6" y1="315.26399999999995" x2="357" y2="315.26399999999995" stroke="#000" stroke-width="1.2" />
<line x1="350.6" y1="306.936" x2="357" y2="306.936" stroke="#000" stroke-width="1.2" />
<line x1="350.6" y1="298.60799999999995" x2="357" y2="298.60799999999995" stroke="#000" stroke-width="1.2" />
<line x1="348.5" y1="290.28" x2="359.3" y2="290.28" stroke="#000" stroke-width="1.2" />
<line x1="350.6" y1="281.95199999999994" x2="357" y2="281.95199999999994" stroke="#000" stroke-width="1.2" />
<line x1="350.6" y1="273.62399999999997" x2="357" y2="273.62399999999997" stroke="#000" stroke-width="1.2" />
<line x1="350.6" y1="265.296" x2="357" y2="265.296" stroke="#000" stroke-width="1.2" />
<line x1="350.6" y1="256.96799999999996" x2="357" y2="256.96799999999996" stroke="#000" stroke-width="1.2" />
<line x1="348.5" y1="248.64" x2="359.3" y2="248.64" stroke="#000" stroke-width="1.2" />
<line x1="350.6" y1="240.31199999999995" x2="357" y2="240.31199999999995" stroke="#000" stroke-width="1.2" />
<line x1="350.6" y1="231.98399999999998" x2="357" y2="231.98399999999998" stroke="#000" stroke-width="1.2" />
<line x1="350.6" y1="223.6559999999999" x2="357" y2="223.6559999999999" stroke="#000" stroke-width="1.2" />
<line x1="350.6" y1="215.32799999999992" x2="357" y2="215.32799999999992" stroke="#000" stroke-width="1.2" />
<line x1="348.5" y1="207.0" x2="359.3" y2="207.0" stroke="#000" stroke-width="1.2" />
<line x1="350.6" y1="198.6719999999999" x2="357" y2="198.6719999999999" stroke="#000" stroke-width="1.2" />
<line x1="350.6" y1="190.34399999999994" x2="357" y2="190.34399999999994" stroke="#000" stroke-width="1.2" />
<line x1="350.6" y1="182.0159999999999" x2="357" y2="182.0159999999999" stroke="#000" stroke-width="1.2" />
<line x1="350.6" y1="173.68799999999993" x2="357" y2="173.68799999999993" stroke="#000" stroke-width="1.2" />
<line x1="348.5" y1="165.35999999999996" x2="359.3" y2="165.35999999999996" stroke="#000" stroke-width="1.2" />
<line x1="353.9" y1="618.2" x2="353.9" y2="628.6" stroke="#000" stroke-width="1.2" />
<line x1="370.71" y1="623" x2="370.71" y2="626" stroke="#000" stroke-width="1.2" />
<line x1="387.52" y1="623" x2="387.52" y2="626" stroke="#000" stroke-width="1.2" />
<line x1="404.33" y1="623" x2="404.33" y2="626" stroke="#000" stroke-width="1.2" />
<line x1="421.14" y1="618.2" x2="421.14" y2="628.6" stroke="#000" stroke-width="1.2" />
<line x1="437.95" y1="623" x2="437.95" y2="626" stroke="#000" stroke-width="1.2" />
<line x1="454.76" y1="623" x2="454.76" y2="626" stroke="#000" stroke-width="1.2" />
<line x1="471.56999999999994" y1="623" x2="471.56999999999994" y2="626" stroke="#000" stroke-width="1.2" />
<line x1="488.38" y1="618.2" x2="488.38" y2="628.6" stroke="#000" stroke-width="1.2" />
<line x1="505.18999999999994" y1="623" x2="505.18999999999994" y2="626" stroke="#000" stroke-width="1.2" />
<line x1="522.0" y1="623" x2="522.0" y2="626" stroke="#000" stroke-width="1.2" />
<line x1="538.81" y1="623" x2="538.81" y2="626" stroke="#000" stroke-width="1.2" />
<line x1="555.6199999999999" y1="618.2" x2="555.6199999999999" y2="628.6" stroke="#000" stroke-width="1.2" />
<line x1="572.43" y1="623" x2="572.43" y2="626" stroke="#000" stroke-width="1.2" />
<line x1="589.24" y1="623" x2="589.24" y2="626" stroke="#000" stroke-width="1.2" />
<line x1="606.05" y1="623" x2="606.05" y2="626" stroke="#000" stroke-width="1.2" />
<line x1="622.8599999999999" y1="618.2" x2="622.8599999999999" y2="628.6" stroke="#000" stroke-width="1.2" />
<line x1="639.67" y1="623" x2="639.67" y2="626" stroke="#000" stroke-width="1.2" />
<line x1="656.48" y1="623" x2="656.48" y2="626" stroke="#000" stroke-width="1.2" />
<line x1="673.29" y1="623" x2="673.29" y2="626" stroke="#000" stroke-width="1.2" />
<line x1="690.0999999999999" y1="618.2" x2="690.0999999999999" y2="628.6" stroke="#000" stroke-width="1.2" />
<line x1="706.91" y1="623" x2="706.91" y2="626" stroke="#000" stroke-width="1.2" />
<line x1="723.72" y1="623" x2="723.72" y2="626" stroke="#000" stroke-width="1.2" />
<line x1="740.53" y1="623" x2="740.53" y2="626" stroke="#000" stroke-width="1.2" />
<line x1="757.3399999999999" y1="618.2" x2="757.3399999999999" y2="628.6" stroke="#000" stroke-width="1.2" />
<line x1="774.1499999999999" y1="623" x2="774.1499999999999" y2="626" stroke="#000" stroke-width="1.2" />
<line x1="790.9599999999999" y1="623" x2="790.9599999999999" y2="626" stroke="#000" stroke-width="1.2" />
<line x1="807.77" y1="623" x2="807.77" y2="626" stroke="#000" stroke-width="1.2" />
<line x1="824.5799999999999" y1="618.2" x2="824.5799999999999" y2="628.6" stroke="#000" stroke-width="1.2" />
<polyline points="390.0,621.8 418.4,621.8 419.5,611.0 420.5,611.0 421.6,621.8 426.8,621.8 428.1,614.5 429.1,614.5 430.4,621.8 466.5,621.8 467.5,609.0 468.5,609.0 469.5,621.8 470.5,621.8 471.5,608.0 472.5,608.0 473.5,621.8 474.5,621.8 475.5,609.0 476.5,609.0 477.5,621.8 478.5,621.8 479.5,613.0 480.5,613.0 481.5,621.8 491.8,621.8 492.9,609.7 493.9,609.7 495.0,621.8 504.9,621.8 506.2,602.8 507.2,602.8 508.5,621.8 553.0,621.8 556.0,620.0 558.0,600.0 561.5,520.0 564.0,460.0 566.1,385.0 569.0,460.0 570.3,493.0 572.4,520.0 573.7,566.0 578.0,597.0 580.3,619.0 582.0,621.8 592.5,621.8 593.8,612.0 594.8,612.0 596.1,621.8 607.9,621.8 609.0,616.5 610.0,616.5 611.1,621.8 613.7,621.8 615.0,608.4 616.0,608.4 617.3,621.8 627.8,621.8 629.1,603.4 630.1,603.4 631.4,621.8 669.3,621.8 670.3,602.8 671.3,602.8 672.3,621.8 672.4,621.8 673.1,613.0 674.1,613.0 674.8,621.8 675.3,621.8 676.2,607.9 677.2,607.9 678.1,621.8 678.3,621.8 679.3,611.8 680.3,611.8 681.3,621.8 709.2,621.8 710.2,611.8 711.2,611.8 712.2,621.8 731.3,621.8 732.6,616.3 733.6,616.3 734.9,621.8 748.0,621.8" fill="none" stroke="#a52a2a" stroke-width="2.3" stroke-linejoin="round" /><polyline points="390.0,621.8 390.7,621.8 391.5,618.0 392.5,618.0 393.3,621.8 393.0,621.8 393.8,604.0 394.8,604.0 395.6,621.8 408.5,621.8 409.5,611.7 410.5,611.7 411.5,621.8 412.9,621.8 413.8,613.0 414.8,613.0 415.7,621.8 417.1,621.8 418.0,612.0 419.0,612.0 419.9,621.8 422.9,621.8 423.8,612.5 424.8,612.5 425.7,621.8 450.5,621.8 451.3,600.0 452.0,500.0 455.4,263.6 457.4,480.0 459.3,575.0 461.3,486.7 462.6,621.8 464.5,566.6 465.8,621.8 468.5,621.8 469.5,612.0 470.5,612.0 471.5,621.8 474.5,621.8 475.5,612.0 476.5,612.0 477.5,621.8 482.5,621.8 483.5,599.3 484.5,599.3 485.5,621.8 486.6,621.8 487.5,612.0 488.5,612.0 489.4,621.8 492.0,621.8 492.9,613.0 493.9,613.0 494.8,621.8 495.6,621.8 496.5,618.0 497.5,618.0 498.4,621.8 505.5,621.8 506.5,606.0 507.5,606.0 508.5,621.8 537.8,621.8 539.1,617.5 540.1,617.5 541.4,621.8 552.0,621.8 554.7,620.0 557.2,560.0 558.0,520.0 560.5,460.0 562.0,400.0 563.5,340.0 564.5,300.0 565.5,274.0 567.5,300.0 569.5,314.0 570.5,340.0 571.5,357.0 573.0,400.0 573.5,460.0 576.0,500.0 577.0,520.0 579.0,566.0 583.0,597.0 584.0,600.6 586.0,621.8 587.4,621.8 589.3,606.3 590.3,606.3 592.2,621.8 595.0,621.8 596.3,603.0 597.3,603.0 598.6,621.8 601.8,621.8 603.1,605.8 604.1,605.8 605.4,621.8 606.8,621.8 608.1,606.9 609.1,606.9 610.4,621.8 610.9,621.8 612.1,600.7 613.1,600.7 614.3,621.8 619.1,621.8 620.2,597.9 621.2,597.9 622.3,621.8 711.5,621.8 712.5,616.9 713.5,616.9 714.5,621.8 739.4,621.8 740.5,615.7 741.5,615.7 742.6,621.8 745.1,621.8 746.1,607.9 747.1,607.9 748.1,621.8 748.3,621.8" fill="none" stroke="#8a2be2" stroke-width="2.3" stroke-linejoin="round" /><polyline points="390.0,621.8 401.0,621.8 402.5,615.4 403.5,615.4 405.0,621.8 405.0,621.8 406.5,615.0 407.5,615.0 409.0,621.8 553.0,621.8 556.5,621.8 557.7,619.0 559.2,616.0 559.0,566.0 559.4,520.0 561.5,460.0 562.7,400.0 564.0,340.0 564.2,300.0 564.5,272.0 566.4,229.5 566.3,272.0 567.0,300.0 568.0,336.0 571.6,357.0 572.0,400.0 572.2,460.0 575.4,500.0 576.0,520.0 578.3,566.0 582.3,597.4 583.8,619.0 585.0,621.8 597.6,621.8 599.7,608.6 600.7,608.6 602.8,621.8 612.7,621.8 614.0,615.3 615.0,615.3 616.3,621.8 631.8,621.8 633.3,592.1 634.3,592.1 635.8,621.8 657.7,621.8 658.8,617.4 659.8,617.4 660.9,621.8 748.0,621.8" fill="none" stroke="#0000ff" stroke-width="2.3" stroke-linejoin="round" />
<text x="331.5" y="627.6999999999999" font-size="14.8" fill="#000" text-anchor="middle" font-weight="normal" >0</text>
<text x="331.5" y="586.06" font-size="14.8" fill="#000" text-anchor="middle" font-weight="normal" >1</text>
<text x="331.5" y="544.42" font-size="14.8" fill="#000" text-anchor="middle" font-weight="normal" >2</text>
<text x="331.5" y="502.78" font-size="14.8" fill="#000" text-anchor="middle" font-weight="normal" >3</text>
<text x="331.5" y="461.14" font-size="14.8" fill="#000" text-anchor="middle" font-weight="normal" >4</text>
<text x="331.5" y="419.5" font-size="14.8" fill="#000" text-anchor="middle" font-weight="normal" >5</text>
<text x="331.5" y="377.85999999999996" font-size="14.8" fill="#000" text-anchor="middle" font-weight="normal" >6</text>
<text x="331.5" y="336.21999999999997" font-size="14.8" fill="#000" text-anchor="middle" font-weight="normal" >7</text>
<text x="331.5" y="294.58" font-size="14.8" fill="#000" text-anchor="middle" font-weight="normal" >8</text>
<text x="331.5" y="252.94" font-size="14.8" fill="#000" text-anchor="middle" font-weight="normal" >9</text>
<text x="331.5" y="211.3" font-size="14.8" fill="#000" text-anchor="middle" font-weight="normal" >10</text>
<text x="331.5" y="169.65999999999997" font-size="14.8" fill="#000" text-anchor="middle" font-weight="normal" >11</text>
<text x="353.9" y="646.8" font-size="14.5" fill="#000" text-anchor="middle" font-weight="normal" >132</text>
<text x="421.14" y="646.8" font-size="14.5" fill="#000" text-anchor="middle" font-weight="normal" >134</text>
<text x="488.38" y="646.8" font-size="14.5" fill="#000" text-anchor="middle" font-weight="normal" >136</text>
<text x="555.6199999999999" y="646.8" font-size="14.5" fill="#000" text-anchor="middle" font-weight="normal" >138</text>
<text x="622.8599999999999" y="646.8" font-size="14.5" fill="#000" text-anchor="middle" font-weight="normal" >140</text>
<text x="690.0999999999999" y="646.8" font-size="14.5" fill="#000" text-anchor="middle" font-weight="normal" >142</text>
<text x="757.3399999999999" y="646.8" font-size="14.5" fill="#000" text-anchor="middle" font-weight="normal" >144</text>
<text x="824.5799999999999" y="646.8" font-size="14.5" fill="#000" text-anchor="middle" font-weight="normal" >146</text>
<text x="589" y="670" font-size="14.2" fill="#000" text-anchor="middle" font-weight="bold" >Retention Time</text>
<text x="0" y="0" font-size="14.2" font-weight="bold" text-anchor="middle" transform="translate(309.6,393.5) rotate(-90)">Intensity (10^6)</text>
<text x="455.3" y="239" font-size="12" fill="#8a2be2" text-anchor="middle" font-weight="normal" >135.0</text><text x="455" y="253" font-size="12" fill="#8a2be2" text-anchor="middle" font-weight="normal" >+15.3 ppm</text>
<text x="566.8" y="206.2" font-size="12" fill="#0000ff" text-anchor="middle" font-weight="normal" >138.4</text><text x="566" y="219" font-size="12" fill="#0000ff" text-anchor="middle" font-weight="normal" >-0.8 ppm</text>
<rect x="479.4" y="568.2" width="55.6" height="28.199999999999932" fill="#fff" fill-opacity="0.85"/><text x="507.2" y="579.2" font-size="12" fill="#a52a2a" text-anchor="middle" font-weight="normal" >136.6</text><text x="507.2" y="593.4" font-size="12" fill="#a52a2a" text-anchor="middle" font-weight="normal" >-1.1 ppm</text>
<rect x="448.7" y="571.1" width="55.6" height="28.299999999999955" fill="#fff" fill-opacity="0.85"/><text x="476.5" y="582.1" font-size="12" fill="#a52a2a" text-anchor="middle" font-weight="normal" >135.7</text><text x="476.5" y="596.4" font-size="12" fill="#a52a2a" text-anchor="middle" font-weight="normal" >+0.3 ppm</text>
<rect x="593.2" y="561.5" width="55.6" height="28.5" fill="#fff" fill-opacity="0.85"/><text x="621" y="572.5" font-size="12" fill="#8a2be2" text-anchor="middle" font-weight="normal" >139.9</text><text x="621" y="587" font-size="12" fill="#8a2be2" text-anchor="middle" font-weight="normal" >-5.3 ppm</text>
<rect x="554.7" y="565.4" width="55.6" height="27.600000000000023" fill="#fff" fill-opacity="0.85"/><text x="582.5" y="576.4" font-size="12" fill="#8a2be2" text-anchor="middle" font-weight="normal" >138.8</text><text x="582.5" y="590" font-size="12" fill="#8a2be2" text-anchor="middle" font-weight="normal" >-3.5 ppm</text>
<rect x="642.2" y="568.8" width="55.6" height="27.5" fill="#fff" fill-opacity="0.85"/><text x="670" y="579.8" font-size="12" fill="#a52a2a" text-anchor="middle" font-weight="normal" >141.4</text><text x="670" y="593.3" font-size="12" fill="#a52a2a" text-anchor="middle" font-weight="normal" >-8.9 ppm</text>
<rect x="602.35" y="557.5" width="62.300000000000004" height="27.5" fill="#fff" fill-opacity="0.85"/><text x="633.5" y="568.5" font-size="12" fill="#0000ff" text-anchor="middle" font-weight="normal" >140.3</text><text x="633.5" y="582" font-size="12" fill="#0000ff" text-anchor="middle" font-weight="normal" >-16.7 ppm</text></svg>
<div class="a" style="left:856px;top:123px;width:274px;height:562px;overflow:hidden"><svg width="1138" height="712" style="left:-856px;top:-123px" viewBox="0 0 1138 712" font-family="'Liberation Sans', sans-serif"><line x1="920" y1="606.8" x2="920" y2="623.5" stroke="#bdbdbd" stroke-width="1" />
<line x1="922" y1="603.7" x2="922" y2="623.5" stroke="#808080" stroke-width="1" />
<line x1="924" y1="607" x2="924" y2="623.5" stroke="#bdbdbd" stroke-width="1" />
<line x1="929.5" y1="604" x2="929.5" y2="623.5" stroke="#808080" stroke-width="1" />
<line x1="931" y1="532" x2="931" y2="623.5" stroke="#bdbdbd" stroke-width="1" />
<line x1="933" y1="603" x2="933" y2="623.5" stroke="#808080" stroke-width="1" />
<line x1="936.5" y1="604" x2="936.5" y2="623.5" stroke="#bdbdbd" stroke-width="1" />
<line x1="942" y1="595" x2="942" y2="623.5" stroke="#808080" stroke-width="1" />
<line x1="945" y1="605" x2="945" y2="623.5" stroke="#bdbdbd" stroke-width="1" />
<line x1="948" y1="600.5" x2="948" y2="623.5" stroke="#808080" stroke-width="1" />
<line x1="953" y1="598.3" x2="953" y2="623.5" stroke="#bdbdbd" stroke-width="1" />
<line x1="956.8" y1="591.5" x2="956.8" y2="623.5" stroke="#808080" stroke-width="1" />
<line x1="963" y1="603" x2="963" y2="623.5" stroke="#bdbdbd" stroke-width="1" />
<line x1="965" y1="590" x2="965" y2="623.5" stroke="#808080" stroke-width="1" />
<line x1="966.3" y1="515" x2="966.3" y2="623.5" stroke="#bdbdbd" stroke-width="1" />
<line x1="981.5" y1="592.2" x2="981.5" y2="623.5" stroke="#808080" stroke-width="1" />
<line x1="1007.5" y1="594.5" x2="1007.5" y2="623.5" stroke="#bdbdbd" stroke-width="1" />
<line x1="1013.8" y1="603.3" x2="1013.8" y2="623.5" stroke="#808080" stroke-width="1" />
<line x1="1042.9" y1="601.5" x2="1042.9" y2="623.5" stroke="#bdbdbd" stroke-width="1" />
<line x1="926.8" y1="532" x2="926.8" y2="623.5" stroke="#8a2be2" stroke-width="2" />
<line x1="943.8" y1="551.1" x2="943.8" y2="623.5" stroke="#8a2be2" stroke-width="2" />
<line x1="950.5" y1="586.7" x2="950.5" y2="623.5" stroke="#8a2be2" stroke-width="2" />
<line x1="969.3" y1="547.1" x2="969.3" y2="623.5" stroke="#8a2be2" stroke-width="2" />
<line x1="984.5" y1="563" x2="984.5" y2="623.5" stroke="#8a2be2" stroke-width="2" />
<line x1="925.4" y1="608.6" x2="925.4" y2="623.5" stroke="#0000ff" stroke-width="2" />
<line x1="938.5" y1="592.7" x2="938.5" y2="623.5" stroke="#0000ff" stroke-width="2" />
<line x1="967.8" y1="440.8" x2="967.8" y2="623.5" stroke="#0000ff" stroke-width="2" />
<line x1="982.7" y1="500.7" x2="982.7" y2="623.5" stroke="#0000ff" stroke-width="2" />
<line x1="991.5" y1="427.6" x2="991.5" y2="623.5" stroke="#0000ff" stroke-width="2" />
<line x1="1010.5" y1="303.6" x2="1010.5" y2="623.5" stroke="#0000ff" stroke-width="2" />
<line x1="1023.7" y1="424.7" x2="1023.7" y2="623.5" stroke="#0000ff" stroke-width="2" />
<line x1="1044.6" y1="258.4" x2="1044.6" y2="623.5" stroke="#0000ff" stroke-width="2" />
<line x1="1058.9" y1="394.7" x2="1058.9" y2="623.5" stroke="#0000ff" stroke-width="2" />
<line x1="1077.5" y1="601.5" x2="1077.5" y2="623.5" stroke="#0000ff" stroke-width="2" />
<line x1="1086" y1="557.3" x2="1086" y2="623.5" stroke="#0000ff" stroke-width="2" />
<line x1="912" y1="165.6" x2="912" y2="623.3" stroke="#000" stroke-width="1.2" />
<line x1="912" y1="623.5" x2="1100.5" y2="623.5" stroke="#000" stroke-width="1.2" />
<line x1="906" y1="623.5" x2="918" y2="623.5" stroke="#000" stroke-width="1.2" />
<line x1="909.5" y1="600.12" x2="916.5" y2="600.12" stroke="#000" stroke-width="1.2" />
<line x1="909.5" y1="576.74" x2="916.5" y2="576.74" stroke="#000" stroke-width="1.2" />
<line x1="909.5" y1="553.36" x2="916.5" y2="553.36" stroke="#000" stroke-width="1.2" />
<line x1="909.5" y1="529.98" x2="916.5" y2="529.98" stroke="#000" stroke-width="1.2" />
<line x1="906" y1="506.6" x2="918" y2="506.6" stroke="#000" stroke-width="1.2" />
<line x1="909.5" y1="483.21999999999997" x2="916.5" y2="483.21999999999997" stroke="#000" stroke-width="1.2" />
<line x1="909.5" y1="459.84" x2="916.5" y2="459.84" stroke="#000" stroke-width="1.2" />
<line x1="909.5" y1="436.46" x2="916.5" y2="436.46" stroke="#000" stroke-width="1.2" />
<line x1="909.5" y1="413.08" x2="916.5" y2="413.08" stroke="#000" stroke-width="1.2" />
<line x1="906" y1="389.7" x2="918" y2="389.7" stroke="#000" stroke-width="1.2" />
<line x1="909.5" y1="366.32" x2="916.5" y2="366.32" stroke="#000" stroke-width="1.2" />
<line x1="909.5" y1="342.93999999999994" x2="916.5" y2="342.93999999999994" stroke="#000" stroke-width="1.2" />
<line x1="909.5" y1="319.56" x2="916.5" y2="319.56" stroke="#000" stroke-width="1.2" />
<line x1="909.5" y1="296.17999999999995" x2="916.5" y2="296.17999999999995" stroke="#000" stroke-width="1.2" />
<line x1="906" y1="272.79999999999995" x2="918" y2="272.79999999999995" stroke="#000" stroke-width="1.2" />
<line x1="909.5" y1="249.41999999999996" x2="916.5" y2="249.41999999999996" stroke="#000" stroke-width="1.2" />
<line x1="909.5" y1="226.03999999999996" x2="916.5" y2="226.03999999999996" stroke="#000" stroke-width="1.2" />
<line x1="909.5" y1="202.65999999999997" x2="916.5" y2="202.65999999999997" stroke="#000" stroke-width="1.2" />
<line x1="909.5" y1="179.27999999999997" x2="916.5" y2="179.27999999999997" stroke="#000" stroke-width="1.2" />
<line x1="919.3" y1="620" x2="919.3" y2="626" stroke="#000" stroke-width="1.2" />
<line x1="932.1999999999999" y1="620" x2="932.1999999999999" y2="626" stroke="#000" stroke-width="1.2" />
<line x1="945.1" y1="620" x2="945.1" y2="626" stroke="#000" stroke-width="1.2" />
<line x1="958.0" y1="620" x2="958.0" y2="626" stroke="#000" stroke-width="1.2" />
<line x1="970.9" y1="617" x2="970.9" y2="628.5" stroke="#000" stroke-width="1.2" />
<line x1="983.8" y1="620" x2="983.8" y2="626" stroke="#000" stroke-width="1.2" />
<line x1="996.6999999999999" y1="620" x2="996.6999999999999" y2="626" stroke="#000" stroke-width="1.2" />
<line x1="1009.6" y1="620" x2="1009.6" y2="626" stroke="#000" stroke-width="1.2" />
<line x1="1022.5" y1="620" x2="1022.5" y2="626" stroke="#000" stroke-width="1.2" />
<line x1="1035.4" y1="617" x2="1035.4" y2="628.5" stroke="#000" stroke-width="1.2" />
<line x1="1048.3" y1="620" x2="1048.3" y2="626" stroke="#000" stroke-width="1.2" />
<line x1="1061.2" y1="620" x2="1061.2" y2="626" stroke="#000" stroke-width="1.2" />
<line x1="1074.1" y1="620" x2="1074.1" y2="626" stroke="#000" stroke-width="1.2" />
<line x1="1087.0" y1="620" x2="1087.0" y2="626" stroke="#000" stroke-width="1.2" />
<line x1="1099.9" y1="617" x2="1099.9" y2="628.5" stroke="#000" stroke-width="1.2" />
<text x="895" y="627.3" font-size="14.8" fill="#000" text-anchor="middle" font-weight="normal" >0</text>
<text x="895" y="510.40000000000003" font-size="14.8" fill="#000" text-anchor="middle" font-weight="normal" >1</text>
<text x="895" y="393.5" font-size="14.8" fill="#000" text-anchor="middle" font-weight="normal" >2</text>
<text x="895" y="276.59999999999997" font-size="14.8" fill="#000" text-anchor="middle" font-weight="normal" >3</text>
<text x="970.9" y="647.5" font-size="14" fill="#000" text-anchor="middle" font-weight="normal" >500</text>
<text x="1035.4" y="647.5" font-size="14" fill="#000" text-anchor="middle" font-weight="normal" >1000</text>
<text x="1099.9" y="647.5" font-size="14" fill="#000" text-anchor="middle" font-weight="normal" >1500</text>
<text x="1006" y="669.5" font-size="14" fill="#000" text-anchor="middle" font-weight="bold" font-style="italic">m/z</text>
<text x="0" y="0" font-size="14.2" font-weight="bold" text-anchor="middle" transform="translate(877.6,394.7) rotate(-90)">Intensity (10^6)</text>
<text x="1044" y="250" font-size="12" fill="#0000ff" text-anchor="middle" font-weight="normal" >y9</text>
<text x="1010" y="296" font-size="12" fill="#0000ff" text-anchor="middle" font-weight="normal" >y7</text>
<text x="1059" y="387.5" font-size="12" fill="#0000ff" text-anchor="middle" font-weight="normal" >y10</text>
<text x="1023" y="418" font-size="12" fill="#0000ff" text-anchor="middle" font-weight="normal" >y8</text>
<text x="991" y="421" font-size="12" fill="#0000ff" text-anchor="middle" font-weight="normal" >y6</text>
<text x="967.5" y="434" font-size="12" fill="#0000ff" text-anchor="middle" font-weight="normal" >y4</text>
<text x="982.7" y="493.5" font-size="12" fill="#0000ff" text-anchor="middle" font-weight="normal" >y5</text>
<text x="1085" y="550" font-size="12" fill="#0000ff" text-anchor="middle" font-weight="normal" >y12</text>
<text x="1077" y="595" font-size="12" fill="#0000ff" text-anchor="middle" font-weight="normal" >y11</text>
<text x="926.8" y="523.7" font-size="12" fill="#8a2be2" text-anchor="middle" font-weight="normal" >b2</text>
<text x="942.9" y="542.4" font-size="12" fill="#8a2be2" text-anchor="middle" font-weight="normal" >b3</text>
<text x="951" y="578.5" font-size="12" fill="#8a2be2" text-anchor="middle" font-weight="normal" >b4</text>
<text x="937.4" y="584.9" font-size="12" fill="#0000ff" text-anchor="middle" font-weight="normal" >y2</text>
<text x="924.6" y="599.5" font-size="12" fill="#0000ff" text-anchor="middle" font-weight="normal" >y1</text>
<text x="970.2" y="537.4" font-size="12" fill="#8a2be2" text-anchor="middle" font-weight="normal" >b5</text>
<text x="984.5" y="554.4" font-size="12" fill="#8a2be2" text-anchor="middle" font-weight="normal" >b6</text>
<text x="856" y="149.5" font-size="18" fill="#000" text-anchor="start" font-weight="bold" >Tutorial - TGEGFLCVFAINNTK, (</text></svg></div>
<div class="a" style="left:7px;top:685px;width:1123px;height:22px;background:#f0f0f0;border-top:1px solid #dcdcdc"></div>
<div class="t" style="left:11px;top:692px;font-size:11.2px;color:#000">Ready</div>
<div class="t" style="left:805px;top:690.8px;font-size:11.6px;color:#000;word-spacing:0px">3/3,992 prot&nbsp; 28/9,092 pep&nbsp; 54/18,003 prec&nbsp; 160/54,009 tran</div>
<svg width="1138" height="712" style="left:0;top:0" viewBox="0 0 1138 712" font-family="'Liberation Sans', sans-serif"><path d="M19.5,8 L19.5,10.6 M17,11.6 L22,11.6" stroke="#1c5bb0" stroke-width="1.6"/>
<path d="M18.4,12 L18.4,21 M20.6,12 L20.6,21" stroke="#1c5bb0" stroke-width="1.6"/>
<path d="M22.5,15 L22.5,21.5 L28.8,21.5 L28.8,14.8 L26.2,14.3 L26.2,20 L24.8,20 L24.8,15.2 Z" fill="#1c5bb0"/>
<rect x="15" y="21.3" width="16" height="1.9" rx="0.9" fill="#1c5bb0"/>
<line x1="1010.5" y1="15.5" x2="1021.5" y2="15.5" stroke="#000" stroke-width="1"/>
<rect x="1056.5" y="10.5" width="10" height="10" fill="none" stroke="#000" stroke-width="1"/>
<path d="M1102,10 L1112,20 M1112,10 L1102,20" stroke="#000" stroke-width="1.1"/>
<path d="M14.5,61.5 L21,61.5 L24,64.5 L24,73.5 L14.5,73.5 Z" fill="#fbfcff" stroke="#2d3e5c" stroke-width="1"/>
<path d="M16,71 L22.5,71" stroke="#c8d4e6" stroke-width="3"/>
<path d="M11,59 L18,66 M18,59 L11,66 M14.5,58.5 L14.5,66.5 M10.5,62.5 L18.5,62.5" stroke="#f2c53d" stroke-width="1.1"/>
<path d="M33.5,63 L38,63 L39,64.5 L45,64.5 L45,72.5 L33.5,72.5 Z" fill="#f6d77c" stroke="#8a7440" stroke-width="0.9"/>
<path d="M35,66.5 L48.5,66.5 L45.5,73 L33,73 Z" fill="#f3b530" stroke="#7a5e20" stroke-width="0.9"/>
<path d="M41,62 Q44,58.5 47.5,61.5" fill="none" stroke="#2e6bb8" stroke-width="1.3"/>
<path d="M46,60 L49,62.5 L46.5,63.5 Z" fill="#2e6bb8"/>
<rect x="57.2" y="60.3" width="13.5" height="13.3" fill="#5a5fc8" stroke="#2f3390" stroke-width="0.9"/>
<rect x="59.6" y="60.6" width="8.8" height="5.6" fill="#f4f6ff"/>
<rect x="61" y="68.6" width="6.4" height="4.8" fill="#1b1b3a"/><rect x="63.6" y="69.3" width="2.4" height="3.4" fill="#e6e6f0"/>
<path d="M84,64 Q89,57.5 94.5,62.5" fill="none" stroke="#f2b52a" stroke-width="1.6"/>
<path d="M79,74.5 L79,68 L81,68 L81,61 L82.5,59.5 L84,61 L84,67 L86,65 L87,69 L89,66.5 L90,74.5 Z" fill="#3d7fd8"/>
<path d="M79,72 L95,72 L95,74.5 L79,74.5 Z" fill="#6aa6ef"/>
<path d="M88.5,68.5 L92,65 L92,67 L95.5,67 L95.5,70 L92,70 L92,72 Z" fill="#22b822"/>
<line x1="102.5" y1="60" x2="102.5" y2="74.5" stroke="#c5c5c5" stroke-width="1"/>
<line x1="177.8" y1="60" x2="177.8" y2="74.5" stroke="#c5c5c5" stroke-width="1"/>
<line x1="247.6" y1="60" x2="247.6" y2="74.5" stroke="#c5c5c5" stroke-width="1"/>
<path d="M112,60 L116.5,68 M119,60 L114.5,68" stroke="#8c8c8c" stroke-width="1.6"/>
<circle cx="113" cy="70.8" r="2.4" fill="#4373c8" stroke="#223f7a" stroke-width="0.8"/><circle cx="118.2" cy="70.8" r="2.4" fill="#4373c8" stroke="#223f7a" stroke-width="0.8"/>
<path d="M131.5,60.5 L137,60.5 L139,62.5 L139,69 L131.5,69 Z" fill="#fff" stroke="#3c64b4" stroke-width="0.9"/>
<path d="M137.5,64.5 L143.5,64.5 L146,67 L146,73.3 L137.5,73.3 Z" fill="#fff" stroke="#3c64b4" stroke-width="0.9"/>
<path d="M133,63 L137,63 M133,65 L137,65 M133,67 L136,67 M139.5,68 L144,68 M139.5,70 L144,70 M139.5,72 L144,72" stroke="#5a86d6" stroke-width="0.9"/>
<rect x="154.5" y="61.5" width="11" height="12" fill="#f0c040" stroke="#7a5a10" stroke-width="0.9"/>
<rect x="157.5" y="60" width="5" height="3" fill="#d8d8d8" stroke="#555" stroke-width="0.8"/>
<path d="M160.5,66.5 L167,66.5 L169.5,69 L169.5,73.8 L160.5,73.8 Z" fill="#eef2f8" stroke="#3a4a66" stroke-width="0.9"/>
<path d="M162,70 L167.5,70 M162,72 L167.5,72" stroke="#7c8fb4" stroke-width="0.9"/>
<path d="M186.5,66 Q190,60.5 194.5,63.5 Q198,67 193,72" fill="none" stroke="#2f73d9" stroke-width="2.2"/>
<path d="M185,62 L185,68 L191,67.5 Z" fill="#2f73d9"/>
<path d="M204,66 L209.5,66 L206.75,69 Z" fill="#000"/>
<path d="M226,66 Q222.5,60.5 218,63.5 Q214.5,67 219.5,72" fill="none" stroke="#c4c4c4" stroke-width="2.2"/>
<path d="M227.5,62 L227.5,68 L221.5,67.5 Z" fill="#c4c4c4"/>
<path d="M236,66 L241.5,66 L238.75,69 Z" fill="#9a9a9a"/>
<path d="M1106,60.5 L1109,60.3 L1107,62.5 L1106.5,64 L1108,65" fill="none" stroke="#0a4ee8" stroke-width="1.9" stroke-linejoin="round" stroke-linecap="round"/>
<path d="M1109,66.5 L1111,63.8 L1113,65 L1111.2,66.6 L1110,67.4 L1112,69.3 L1113.5,70.6 L1115.5,69" fill="none" stroke="#0732e0" stroke-width="2" stroke-linejoin="round" stroke-linecap="round"/>
<path d="M1120,66.5 L1125,66.5 L1122.5,69 Z" fill="#000"/><path d="M250.5,90.8 L257.0,90.8 M252.0,84.3 L255.5,84.3 M253.75,90.8 L253.75,94.3" stroke="#000" stroke-width="1.2"/><rect x="252.0" y="84.3" width="3.5" height="6.5" fill="none" stroke="#000" stroke-width="1.1"/><line x1="254.7" y1="84.8" x2="254.7" y2="90.3" stroke="#000" stroke-width="1"/>
<path d="M266.5,84.7 L275.7,93.9 M275.7,84.7 L266.5,93.9" stroke="#000" stroke-width="1.4"/>
<path d="M1099.5,90.8 L1106.0,90.8 M1101.0,84.3 L1104.5,84.3 M1102.75,90.8 L1102.75,94.3" stroke="#000" stroke-width="1.2"/><rect x="1101.0" y="84.3" width="3.5" height="6.5" fill="none" stroke="#000" stroke-width="1.1"/><line x1="1103.7" y1="84.8" x2="1103.7" y2="90.3" stroke="#000" stroke-width="1"/>
<path d="M1115,85 L1123.8,93.8 M1123.8,85 L1115,93.8" stroke="#000" stroke-width="1.4"/>
<path d="M267,109 L273.5,109 L270.25,112.3 Z" fill="#000"/>
<path d="M1047,109.3 L1053,109.3 L1050,112.4 Z" fill="#000"/>
<rect x="1119" y="111.6" width="10" height="10" fill="#d4d4d4"/>
<path d="M1121,115.5 L1126,115.5 M1121,118 L1126,118 L1123.5,120.6 Z" stroke="#000" stroke-width="0.9" fill="#000"/>
<path d="M269,133.8 L273,129.8 L277,133.8" fill="none" stroke="#606060" stroke-width="1.9"/>
<path d="M269,656.5 L273,660.5 L277,656.5" fill="none" stroke="#606060" stroke-width="1.9"/>
<path d="M17.5,673 L13.5,676.5 L17.5,680" fill="none" stroke="#606060" stroke-width="1.9"/>
<path d="M253.5,673 L257.5,676.5 L253.5,680" fill="none" stroke="#606060" stroke-width="1.9"/>
<path d="M796,88.5 L796,97.5 L790.5,93 Z" fill="#fff" stroke="#333" stroke-width="1.2" stroke-linejoin="round"/>
<path d="M805.5,88.5 L805.5,97.5 L811,93 Z" fill="#fff" stroke="#333" stroke-width="1.2" stroke-linejoin="round"/>
<path d="M818,92.6 L827,92.6 L822.5,97.2 Z" fill="#000"/>
<path d="M833.5,88.5 L842.5,97.5 M842.5,88.5 L833.5,97.5" stroke="#000" stroke-width="1.6"/>
<path d="M288,104.5 L310,84.5 L409.5,84.5 L409.5,104.5" fill="#fff" stroke="#9a9a9a" stroke-width="1"/>
<path d="M410.5,104 L410.5,87 Q410.5,84.5 414,84.5 L513,84.5 Q516,84.5 516,87 L516,104" fill="#f7f7f7" stroke="#a8a8a8" stroke-width="1"/>
<path d="M517,104 L517,87 Q517,84.5 520.5,84.5 L619.5,84.5 Q622.5,84.5 622.5,87 L622.5,104" fill="#f7f7f7" stroke="#a8a8a8" stroke-width="1"/>
<rect x="288.5" y="104" width="121" height="2" fill="#fff"/>
<text x="310.5" y="98.5" font-size="11.4" font-weight="bold" fill="#000">1_UPS1_100fmol</text>
<text x="420" y="98.8" font-size="11" fill="#000">2_UPS1_300fmol</text>
<text x="526.5" y="98.8" font-size="11" fill="#000">3_UPS1_600fmol</text>
<rect x="1125" y="695" width="1.6" height="1.6" fill="#a0a0a0"/>
<rect x="1125" y="699" width="1.6" height="1.6" fill="#a0a0a0"/>
<rect x="1121" y="699" width="1.6" height="1.6" fill="#a0a0a0"/>
<rect x="1125" y="703" width="1.6" height="1.6" fill="#a0a0a0"/>
<rect x="1121" y="703" width="1.6" height="1.6" fill="#a0a0a0"/>
<rect x="1117" y="703" width="1.6" height="1.6" fill="#a0a0a0"/></svg>
</body></html>
